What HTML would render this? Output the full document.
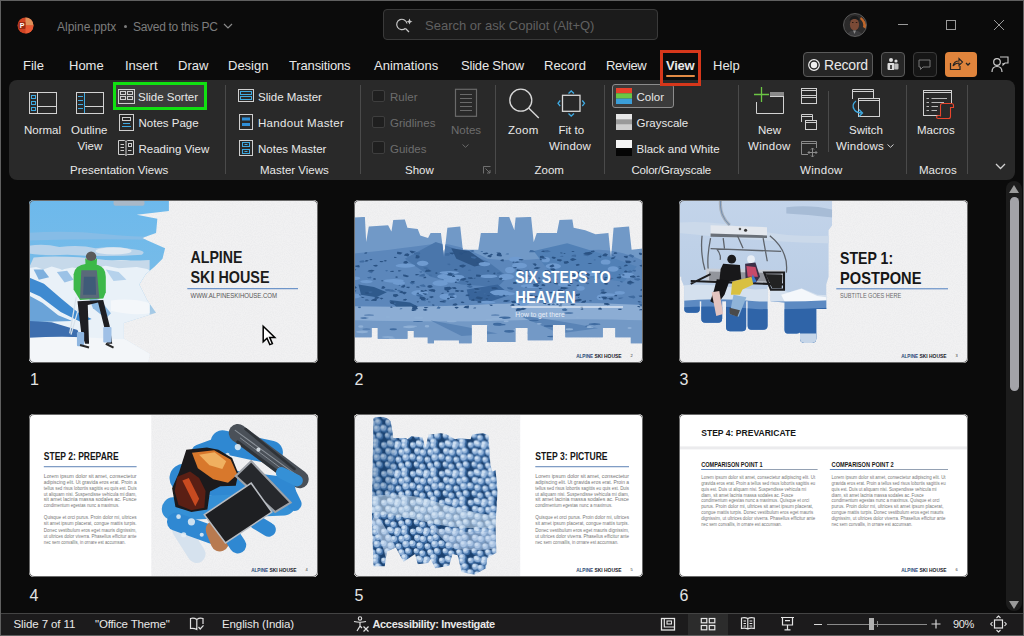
<!DOCTYPE html>
<html><head><meta charset="utf-8">
<style>
*{margin:0;padding:0;box-sizing:border-box}
html,body{width:1024px;height:636px;overflow:hidden;background:#0b0b0b}
body{position:relative;font-family:"Liberation Sans",sans-serif;color:#e8e8e8}
.a{position:absolute;white-space:nowrap;line-height:1}
.t13{font-size:13px}
.t12{font-size:12px;letter-spacing:-0.15px}
.dim{color:#6d6d6d}
.sep{position:absolute;width:1px;background:#4a4a4a}
svg{position:absolute;overflow:visible}
#frame{position:absolute;left:0;top:0;width:1024px;height:636px;border:1px solid #606060;pointer-events:none}
</style></head><body>

<!-- TITLE BAR -->
<svg style="left:17px;top:17px" width="17" height="17" viewBox="0 0 17 17">
  <circle cx="8.5" cy="8.5" r="8" fill="#d14424"/>
  <path d="M8.5 .5 A8 8 0 0 1 16.5 8.5 L8.5 8.5Z" fill="#e0915a"/>
  <path d="M8.5 8.5 L16.5 8.5 A8 8 0 0 1 8.5 16.5Z" fill="#e85a35"/>
  <rect x="1.5" y="5" width="7" height="7" rx="1" fill="#9a2b14"/>
  <text x="2.7" y="11" font-family="Liberation Sans" font-weight="700" font-size="7" fill="#fff">P</text>
</svg>
<div class="a" style="left:57px;top:20.5px;font-size:12px;color:#7c7c7c">Alpine.pptx</div>
<div style="position:absolute;left:124px;top:24.5px;width:3px;height:3px;border-radius:50%;background:#7c7c7c"></div>
<div class="a" style="left:133px;top:20.5px;font-size:12px;color:#7c7c7c;letter-spacing:-0.3px">Saved to this PC</div>
<svg style="left:223px;top:22.5px" width="10" height="6" viewBox="0 0 10 6"><path d="M1 1 L5 5 L9 1" stroke="#8a8a8a" stroke-width="1.2" fill="none"/></svg>

<div style="position:absolute;left:383px;top:9px;width:275px;height:31px;border:1px solid #3a3a3a;border-radius:4px;background:#1b1b1b"></div>
<svg style="left:396px;top:17px" width="18" height="17" viewBox="0 0 18 17">
  <path d="M11 6.5 A5.2 5.2 0 1 0 9.5 11.2" stroke="#c8c8c8" stroke-width="1.2" fill="none"/>
  <path d="M9.5 11.5 L13 15" stroke="#c8c8c8" stroke-width="1.3"/>
  <path d="M13.5 1.5 Q13.8 4.2 16.5 4.5 Q13.8 4.8 13.5 7.5 Q13.2 4.8 10.5 4.5 Q13.2 4.2 13.5 1.5Z" fill="#c8c8c8"/>
</svg>
<div class="a t13" style="left:425px;top:19px;color:#606060">Search or ask Copilot (Alt+Q)</div>

<!-- avatar -->
<svg style="left:843px;top:13px" width="24" height="24" viewBox="0 0 24 24">
  <clipPath id="av"><circle cx="12" cy="12" r="11.3"/></clipPath>
  <g clip-path="url(#av)">
    <rect width="24" height="24" fill="#2b2a2a"/>
    <path d="M18 4 Q24 8 23 16 L20 14 Q21 9 17 6Z" fill="#c0662a"/>
    <ellipse cx="11.5" cy="11.5" rx="4.6" ry="6" fill="#7a4a36"/>
    <path d="M9 9.5 H10.5 M12.8 9.5 H14.3" stroke="#2a1a14" stroke-width="1"/>
    <path d="M6.5 8 Q7 3 11.5 3 Q16 3 16.5 8 Q14 5.5 11.5 6 Q9 5.5 6.5 8Z" fill="#1a1a1a"/>
    <path d="M3 24 Q5 17 11.5 17.5 Q18 17 20 24Z" fill="#3a3a3c"/>
    <path d="M10 17.5 L11.5 21 L13 17.5" fill="#8a8a8a"/>
  </g>
  <circle cx="12" cy="12" r="11.5" fill="none" stroke="#6a6a6a" stroke-width="0.8"/>
</svg>
<!-- window controls -->
<div style="position:absolute;left:898px;top:24px;width:10px;height:1px;background:#9a9a9a"></div>
<div style="position:absolute;left:946px;top:20px;width:10px;height:10px;border:1px solid #9a9a9a"></div>
<svg style="left:994px;top:20px" width="10" height="10" viewBox="0 0 10 10"><path d="M0 0L10 10M10 0L0 10" stroke="#9a9a9a" stroke-width="1"/></svg>

<!-- TABS -->
<div class="a t13" style="left:23px;top:59px">File</div>
<div class="a t13" style="left:69px;top:59px">Home</div>
<div class="a t13" style="left:125px;top:59px">Insert</div>
<div class="a t13" style="left:178px;top:59px">Draw</div>
<div class="a t13" style="left:228px;top:59px">Design</div>
<div class="a t13" style="left:289px;top:59px;letter-spacing:-0.15px">Transitions</div>
<div class="a t13" style="left:374px;top:59px">Animations</div>
<div class="a t13" style="left:461px;top:59px;letter-spacing:-0.2px">Slide Show</div>
<div class="a t13" style="left:544px;top:59px">Record</div>
<div class="a t13" style="left:606px;top:59px;letter-spacing:-0.4px">Review</div>
<div class="a t13" style="left:666px;top:59px;font-weight:700;letter-spacing:-0.3px">View</div>
<div style="position:absolute;left:666px;top:75px;width:29px;height:2px;background:#e38b45;border-radius:1px"></div>
<div style="position:absolute;left:660px;top:50px;width:41px;height:36px;border:3px solid #d6371b;z-index:5"></div>
<div class="a t13" style="left:713px;top:59px">Help</div>

<!-- right tab buttons -->
<div style="position:absolute;left:803px;top:52px;width:70px;height:25px;border:1px solid #5a5a5a;border-radius:4px;background:#262626"></div>
<svg style="left:808px;top:59px" width="12" height="12" viewBox="0 0 12 12"><circle cx="6" cy="6" r="5.3" stroke="#eee" stroke-width="1.2" fill="none"/><circle cx="6" cy="6" r="3.2" fill="#eee"/></svg>
<div class="a" style="left:824px;top:58px;font-size:14px;letter-spacing:-0.2px">Record</div>
<div style="position:absolute;left:881px;top:52px;width:24px;height:25px;border:1px solid #5a5a5a;border-radius:4px;background:#262626"></div>
<svg style="left:886px;top:57px" width="14" height="14" viewBox="0 0 14 14"><circle cx="5" cy="3" r="2" fill="#ddd"/><circle cx="10" cy="4" r="1.6" fill="#ddd"/><rect x="1.5" y="6" width="7" height="7" rx="1" fill="#ddd"/><rect x="8.5" y="6.5" width="4" height="6" rx="1" fill="#bbb"/><rect x="4" y="8" width="2" height="4" fill="#444"/></svg>
<div style="position:absolute;left:913px;top:52px;width:24px;height:25px;border:1px solid #3a3a3a;border-radius:4px;background:#161616"></div>
<svg style="left:918px;top:59px" width="14" height="12" viewBox="0 0 14 12"><path d="M1 1H12V8H5L2.5 10.5V8H1Z" stroke="#777" stroke-width="1" fill="none"/></svg>
<div style="position:absolute;left:945px;top:52px;width:32px;height:25px;border-radius:4px;background:#e0843c"></div>
<svg style="left:949px;top:57px" width="24" height="14" viewBox="0 0 24 14"><path d="M1.5 6V12.5H11V9" stroke="#222" stroke-width="1.2" fill="none"/><path d="M4 9 Q5 4 10 4 V1.5 L13.5 5 L10 8.5 V6 Q6.5 6 4 9Z" stroke="#222" stroke-width="1.1" fill="none"/><path d="M17 6 L19 8 L21 6" stroke="#222" stroke-width="1.3" fill="none"/></svg>
<svg style="left:991px;top:56px" width="18" height="17" viewBox="0 0 18 17"><circle cx="6" cy="6" r="3.3" stroke="#ccc" stroke-width="1.2" fill="none"/><path d="M1 16 Q1 10.5 6 10.5 Q11 10.5 11 16" stroke="#ccc" stroke-width="1.2" fill="none"/><path d="M9 1H17V7H14L12 9V7" stroke="#ccc" stroke-width="1.1" fill="none"/></svg>

<!-- RIBBON -->
<div style="position:absolute;left:9px;top:80px;width:1006px;height:100px;background:#292929;border-radius:8px"></div>
<div id="ribbon">
<!-- Presentation Views -->
<svg style="left:28px;top:91px" width="30" height="24" viewBox="0 0 30 24">
  <rect x="1.5" y="1.5" width="27" height="21" stroke="#d2d2d2" stroke-width="1" fill="none"/>
  <path d="M9.5 1.5V22.5M9.5 15.5H28.5" stroke="#d2d2d2" stroke-width="1"/>
  <rect x="3.5" y="4.5" width="4" height="3" stroke="#3fa9e0" stroke-width="1" fill="none"/>
  <rect x="3.5" y="10.5" width="4" height="3" stroke="#3fa9e0" stroke-width="1" fill="none"/>
  <rect x="3.5" y="16.5" width="4" height="3" stroke="#3fa9e0" stroke-width="1" fill="none"/>
</svg>
<div class="a" style="left:24px;top:124.9px;font-size:11.5px">Normal</div>
<svg style="left:75px;top:91px" width="30" height="24" viewBox="0 0 30 24">
  <rect x="1.5" y="1.5" width="27" height="21" stroke="#d2d2d2" stroke-width="1" fill="none"/>
  <path d="M9.5 15.5H28.5" stroke="#d2d2d2" stroke-width="1"/>
  <path d="M9.5 2V22" stroke="#3fa9e0" stroke-width="1"/>
  <path d="M3 5.5H8M3 9.5H8M3 13.5H8M3 17.5H8" stroke="#3fa9e0" stroke-width="1"/>
</svg>
<div class="a" style="left:71px;top:124.9px;font-size:11.5px">Outline</div>
<div class="a" style="left:77.5px;top:140.8px;font-size:11.5px">View</div>

<div style="position:absolute;left:113px;top:82px;width:94px;height:28px;border:3px solid #11e011;background:#3c3c3c"></div>
<svg style="left:117px;top:88px" width="18" height="16" viewBox="0 0 18 16">
  <rect x="1.5" y="1.5" width="16" height="14" stroke="#cfcfcf" stroke-width="1" fill="none"/>
  <rect x="3.5" y="3.5" width="5" height="3" stroke="#cfcfcf" stroke-width="1" fill="none"/>
  <rect x="10.5" y="3.5" width="5" height="3" stroke="#cfcfcf" stroke-width="1" fill="none"/>
  <rect x="3.5" y="8.5" width="5" height="3" stroke="#cfcfcf" stroke-width="1" fill="none"/>
  <rect x="10.5" y="8.5" width="5" height="3" stroke="#cfcfcf" stroke-width="1" fill="none"/>
</svg>
<div class="a" style="left:138px;top:92.3px;font-size:11.5px">Slide Sorter</div>
<svg style="left:118px;top:113px" width="16" height="18" viewBox="0 0 16 18">
  <rect x="1.5" y="1.5" width="14" height="16" stroke="#cfcfcf" stroke-width="1" fill="none"/>
  <rect x="4.5" y="4.5" width="8" height="3" stroke="#cfcfcf" stroke-width="1" fill="none"/>
  <path d="M5 10.5H12M4 13.5H13" stroke="#3fa9e0" stroke-width="1"/>
</svg>
<div class="a" style="left:138.5px;top:118.3px;font-size:11.5px">Notes Page</div>
<svg style="left:117px;top:139px" width="18" height="17" viewBox="0 0 18 17">
  <path d="M1.5 1.5H7.5L9 2.5L10.5 1.5H16.5V15.5H10.5L9 16.5L7.5 15.5H1.5Z" stroke="#cfcfcf" stroke-width="1" fill="none"/>
  <path d="M9 2.5V16" stroke="#cfcfcf" stroke-width="1"/>
  <path d="M3.5 5.5H7M3.5 8.5H7M3.5 11.5H7M11 11.5H14.5" stroke="#cfcfcf" stroke-width="1"/>
  <rect x="11.5" y="4.5" width="3" height="3" stroke="#cfcfcf" stroke-width="1" fill="none"/>
</svg>
<div class="a" style="left:138.5px;top:143.9px;font-size:11.5px">Reading View</div>
<div class="a" style="left:70px;top:164.8px;font-size:11.5px">Presentation Views</div>
<div class="sep" style="left:225px;top:85px;height:89px"></div>

<!-- Master Views -->
<svg style="left:237px;top:88px" width="18" height="15" viewBox="0 0 18 15">
  <rect x="1.5" y="1.5" width="15" height="12" stroke="#cfcfcf" stroke-width="1" fill="none"/>
  <rect x="3.5" y="3.5" width="11" height="3" stroke="#3fa9e0" stroke-width="1" fill="none"/>
  <rect x="3.5" y="8.5" width="11" height="3" stroke="#3fa9e0" stroke-width="1" fill="none"/>
</svg>
<div class="a" style="left:258px;top:92.3px;font-size:11.5px">Slide Master</div>
<svg style="left:238px;top:113px" width="16" height="18" viewBox="0 0 16 18">
  <rect x="1.5" y="1.5" width="13" height="15" stroke="#cfcfcf" stroke-width="1" fill="none"/>
  <rect x="4" y="4.5" width="8" height="3" fill="#2f8fd8"/>
  <rect x="4" y="10" width="8" height="3" fill="#2f8fd8"/>
</svg>
<div class="a" style="left:258px;top:118.3px;font-size:11.5px;letter-spacing:0.3px">Handout Master</div>
<svg style="left:238px;top:139px" width="16" height="18" viewBox="0 0 16 18">
  <rect x="1.5" y="1.5" width="13" height="15" stroke="#cfcfcf" stroke-width="1" fill="none"/>
  <rect x="4.5" y="3.5" width="7" height="4" stroke="#3fa9e0" stroke-width="1" fill="none"/>
  <rect x="4.5" y="10.5" width="7" height="4" stroke="#3fa9e0" stroke-width="1" fill="none"/>
  <path d="M6.5 5.5H9.5M6.5 12.5H9.5" stroke="#3fa9e0" stroke-width="1"/>
</svg>
<div class="a" style="left:258px;top:143.9px;font-size:11.5px">Notes Master</div>
<div class="a" style="left:260px;top:164.8px;font-size:11.5px">Master Views</div>
<div class="sep" style="left:360px;top:85px;height:89px"></div>

<!-- Show -->
<div style="position:absolute;left:372px;top:89.5px;width:12.5px;height:12.5px;border:1px solid #3e3e3e;border-radius:2px;background:#1f1f1f"></div>
<div style="position:absolute;left:372px;top:115.5px;width:12.5px;height:12.5px;border:1px solid #3e3e3e;border-radius:2px;background:#1f1f1f"></div>
<div style="position:absolute;left:372px;top:141.3px;width:12.5px;height:12.5px;border:1px solid #3e3e3e;border-radius:2px;background:#1f1f1f"></div>
<div class="a dim" style="left:390px;top:92.3px;font-size:11.5px">Ruler</div>
<div class="a dim" style="left:390px;top:118.3px;font-size:11.5px">Gridlines</div>
<div class="a dim" style="left:390px;top:143.9px;font-size:11.5px">Guides</div>
<svg style="left:454px;top:88px" width="24" height="30" viewBox="0 0 24 30">
  <rect x="1.5" y="1.3" width="21" height="27" stroke="#6a6a6a" stroke-width="1.2" fill="none"/>
  <path d="M6 6.5H18M6 10.5H18M6 14.5H18M6 18.5H18M6 22.5H18" stroke="#6a6a6a" stroke-width="1.1"/>
</svg>
<div class="a dim" style="left:451px;top:124.9px;font-size:11.5px">Notes</div>
<svg style="left:462px;top:144px" width="7" height="4" viewBox="0 0 7 4"><path d="M.5 .5L3.5 3.3L6.5 .5" stroke="#6a6a6a" stroke-width="1" fill="none"/></svg>
<div class="a" style="left:405px;top:164.8px;font-size:11.5px">Show</div>
<svg style="left:483px;top:166px" width="8" height="8" viewBox="0 0 8 8"><path d="M.5 7.5V.5H7.5M2.5 2.5L7 7M7 4V7H4" stroke="#777" stroke-width="0.9" fill="none"/></svg>
<div class="sep" style="left:494.5px;top:85px;height:89px"></div>

<!-- Zoom -->
<svg style="left:508px;top:88px" width="33" height="32" viewBox="0 0 33 32">
  <circle cx="12.8" cy="12.2" r="11" stroke="#d8d8d8" stroke-width="1.3" fill="none"/>
  <path d="M20.6 20L30.8 30" stroke="#d8d8d8" stroke-width="1.4"/>
</svg>
<div class="a" style="left:508px;top:124.9px;font-size:11.5px;letter-spacing:0.3px">Zoom</div>
<svg style="left:557px;top:89px" width="28" height="29" viewBox="0 0 28 29">
  <rect x="5.5" y="6.3" width="17.5" height="16" stroke="#d8d8d8" stroke-width="1.3" fill="none"/>
  <path d="M11.5 4.5L14.2 2L17 4.5M11.5 24.5L14.2 27L17 24.5M3.2 11.5L1 14.3L3.2 17M25.3 11.5L27.5 14.3L25.3 17" stroke="#3fa9e0" stroke-width="1.3" fill="none"/>
</svg>
<div class="a" style="left:558.5px;top:124.9px;font-size:11.5px">Fit to</div>
<div class="a" style="left:549px;top:140.8px;font-size:11.5px;letter-spacing:0.2px">Window</div>
<div class="a" style="left:534.5px;top:164.8px;font-size:11.5px">Zoom</div>
<div class="sep" style="left:603.5px;top:85px;height:89px"></div>

<!-- Color/Grayscale -->
<div style="position:absolute;left:612px;top:84px;width:62px;height:24px;border:1px solid #8c8c8c;border-radius:3px;background:#3b3b3b"></div>
<svg style="left:616px;top:88px" width="16" height="16" viewBox="0 0 16 16">
  <rect x="0" y="0" width="16" height="5.3" fill="#e8412c"/>
  <rect x="0" y="5.3" width="16" height="5.3" fill="#6cc644"/>
  <rect x="0" y="10.6" width="16" height="5.4" fill="#3b9ed8"/>
</svg>
<div class="a" style="left:636.5px;top:92.3px;font-size:11.5px">Color</div>
<svg style="left:616px;top:114px" width="16" height="16" viewBox="0 0 16 16">
  <rect x="0" y="0" width="16" height="16" fill="#e6e6e6"/>
  <rect x="0" y="5.3" width="16" height="5.3" fill="#9a9a9a"/>
  <rect x="0" y="10.6" width="16" height="5.4" fill="#cfcfcf"/>
</svg>
<div class="a" style="left:636.5px;top:118.3px;font-size:11.5px">Grayscale</div>
<svg style="left:616px;top:140px" width="16" height="16" viewBox="0 0 16 16">
  <rect x="0" y="0" width="16" height="8" fill="#f4f4f4"/>
  <rect x="0" y="8" width="16" height="8" fill="#050505"/>
</svg>
<div class="a" style="left:636.5px;top:143.9px;font-size:11.5px">Black and White</div>
<div class="a" style="left:631.5px;top:164.8px;font-size:11.5px;letter-spacing:-0.2px">Color/Grayscale</div>
<div class="sep" style="left:737.5px;top:85px;height:89px"></div>

<!-- Window -->
<svg style="left:753px;top:86px" width="33" height="30" viewBox="0 0 33 30">
  <path d="M17 6.5H30.5V27.5H3.5V16" stroke="#d2d2d2" stroke-width="1" fill="none"/>
  <rect x="17" y="6" width="14" height="4" fill="#8a8a8a"/>
  <path d="M30.5 10.5H17" stroke="#d2d2d2" stroke-width="1"/>
  <path d="M8.5 1V16M1 8.5H16" stroke="#6cc644" stroke-width="1.3"/>
</svg>
<div class="a" style="left:758px;top:124.9px;font-size:11.5px">New</div>
<div class="a" style="left:748px;top:140.8px;font-size:11.5px;letter-spacing:0.3px">Window</div>
<svg style="left:800px;top:87px" width="18" height="18" viewBox="0 0 18 18">
  <rect x="1.5" y="1.5" width="15" height="15" stroke="#cfcfcf" stroke-width="1" fill="none"/>
  <path d="M1.5 3.5H16.5M1.5 8.5H16.5M1.5 10.5H16.5" stroke="#cfcfcf" stroke-width="1"/>
</svg>
<svg style="left:800px;top:113px" width="18" height="18" viewBox="0 0 18 18">
  <path d="M1.5 9V1.5H12.5V7" stroke="#cfcfcf" stroke-width="1" fill="none"/>
  <path d="M1.5 3.5H12.5" stroke="#cfcfcf" stroke-width="1"/>
  <rect x="5.5" y="7.5" width="11" height="9" stroke="#cfcfcf" stroke-width="1" fill="none"/>
  <path d="M5.5 9.5H16.5" stroke="#cfcfcf" stroke-width="1"/>
</svg>
<svg style="left:800px;top:140px" width="18" height="18" viewBox="0 0 18 18">
  <path d="M1.5 14.5V1.5H16.5V8" stroke="#8a8a8a" stroke-width="1" fill="none"/>
  <path d="M1.5 3.5H16.5M1.5 14.5H8" stroke="#8a8a8a" stroke-width="1"/>
  <path d="M12.5 8V17M8 12.5H17M11 9.5L12.5 8L14 9.5M11 15.5L12.5 17L14 15.5M9.5 11L8 12.5L9.5 14M15.5 11L17 12.5L15.5 14" stroke="#8a8a8a" stroke-width="1" fill="none"/>
</svg>
<div class="sep" style="left:827.5px;top:91px;height:61px"></div>
<svg style="left:848px;top:88px" width="35" height="32" viewBox="0 0 35 32">
  <path d="M4.5 11V1.5H25.5V10.5" stroke="#d2d2d2" stroke-width="1" fill="none"/>
  <path d="M4.5 3.5H25.5" stroke="#d2d2d2" stroke-width="1"/>
  <rect x="10.5" y="10.5" width="21" height="18" stroke="#d2d2d2" stroke-width="1" fill="#292929"/>
  <path d="M10.5 12.5H31.5" stroke="#d2d2d2" stroke-width="1"/>
  <path d="M8 13 Q3 17 6.5 22 Q9 25 14 25" stroke="#3fa9e0" stroke-width="1.3" fill="none"/>
  <path d="M11 21.5L14.5 25L11 28.5" stroke="#3fa9e0" stroke-width="1.3" fill="none"/>
</svg>
<div class="a" style="left:849px;top:124.9px;font-size:11.5px">Switch</div>
<div class="a" style="left:836px;top:140.8px;font-size:11.5px;letter-spacing:0.2px">Windows</div>
<svg style="left:887px;top:144px" width="7" height="4" viewBox="0 0 7 4"><path d="M.5 .5L3.5 3.3L6.5 .5" stroke="#d2d2d2" stroke-width="1" fill="none"/></svg>
<div class="a" style="left:800px;top:164.8px;font-size:11.5px;letter-spacing:0.3px">Window</div>
<div class="sep" style="left:906px;top:85px;height:89px"></div>

<!-- Macros -->
<svg style="left:922px;top:89px" width="33" height="31" viewBox="0 0 33 31">
  <rect x="1.5" y="1.5" width="28" height="25" stroke="#d2d2d2" stroke-width="1" fill="none"/>
  <path d="M1.5 3.5H29.5" stroke="#d2d2d2" stroke-width="1"/>
  <path d="M4.5 9.5H7M9.5 9.5H25M4.5 13.5H7M9.5 13.5H22M4.5 17.5H7M9.5 17.5H16M4.5 21.5H7M9.5 21.5H15" stroke="#b8b8b8" stroke-width="1"/>
  <rect x="17" y="14" width="13" height="15" fill="#292929"/>
  <path d="M18.5 27.5V16.5Q18.5 14.5 20.5 14.5H29.5Q31.5 14.5 31.5 16.5V18.5H28.5V27.5Q28.5 29.5 26.5 29.5H16.5Q14.5 29.5 14.5 28Q14.5 26.5 16.5 26.5H18.5" stroke="#e8452c" stroke-width="1.1" fill="none"/>
</svg>
<div class="a" style="left:917px;top:124.9px;font-size:11.5px">Macros</div>
<div class="a" style="left:919px;top:164.8px;font-size:11.5px">Macros</div>
<div class="sep" style="left:966.5px;top:85px;height:89px"></div>
<svg style="left:995px;top:163px" width="11" height="7" viewBox="0 0 11 7"><path d="M1 1L5.5 5.5L10 1" stroke="#d2d2d2" stroke-width="1.3" fill="none"/></svg>
</div>

<!-- SLIDE AREA -->
<div id="slides">
<svg width="0" height="0" style="position:absolute">
  <defs>
    <filter id="noise" x="0" y="0" width="100%" height="100%">
      <feTurbulence type="fractalNoise" baseFrequency="0.9" numOctaves="2" seed="3" result="n"/>
      <feColorMatrix in="n" type="matrix" values="0 0 0 0 0.55  0 0 0 0 0.57  0 0 0 0 0.62  0 0 0 -1.6 1.0" result="c"/>
      <feComposite in="c" in2="SourceGraphic" operator="in"/>
    </filter>
    <pattern id="trees" patternUnits="userSpaceOnUse" width="112" height="112"><rect width="112" height="112" fill="#1a406e"/><g fill="#3a6aa2"><circle cx="11" cy="13" r="12"/><circle cx="11" cy="125" r="12"/><circle cx="123" cy="13" r="12"/><circle cx="123" cy="125" r="12"/><circle cx="40" cy="10" r="11"/><circle cx="40" cy="122" r="11"/><circle cx="61" cy="20" r="12"/><circle cx="89" cy="15" r="13"/><circle cx="89" cy="127" r="13"/><circle cx="28" cy="37" r="14"/><circle cx="50" cy="42" r="14"/><circle cx="79" cy="41" r="14"/><circle cx="-12" cy="35" r="13"/><circle cx="100" cy="35" r="13"/><circle cx="9" cy="59" r="14"/><circle cx="121" cy="59" r="14"/><circle cx="37" cy="67" r="15"/><circle cx="67" cy="70" r="13"/><circle cx="95" cy="61" r="15"/><circle cx="24" cy="88" r="12"/><circle cx="47" cy="97" r="13"/><circle cx="78" cy="93" r="13"/><circle cx="-8" cy="88" r="13"/><circle cx="104" cy="88" r="13"/><circle cx="34" cy="6" r="14"/><circle cx="34" cy="118" r="14"/><circle cx="64" cy="10" r="15"/><circle cx="64" cy="122" r="15"/><circle cx="90" cy="0" r="14"/><circle cx="90" cy="112" r="14"/></g><g fill="#94b4da"><circle cx="7" cy="9" r="11"/><circle cx="7" cy="121" r="11"/><circle cx="119" cy="9" r="11"/><circle cx="119" cy="121" r="11"/><circle cx="36" cy="6" r="10"/><circle cx="36" cy="118" r="10"/><circle cx="57" cy="16" r="10"/><circle cx="85" cy="11" r="11"/><circle cx="85" cy="123" r="11"/><circle cx="24" cy="33" r="12"/><circle cx="46" cy="38" r="12"/><circle cx="75" cy="37" r="12"/><circle cx="-16" cy="31" r="11"/><circle cx="96" cy="31" r="11"/><circle cx="5" cy="55" r="12"/><circle cx="117" cy="55" r="12"/><circle cx="33" cy="63" r="12"/><circle cx="63" cy="66" r="11"/><circle cx="91" cy="57" r="13"/><circle cx="20" cy="84" r="10"/><circle cx="43" cy="93" r="11"/><circle cx="74" cy="89" r="11"/><circle cx="-12" cy="84" r="11"/><circle cx="100" cy="84" r="11"/><circle cx="30" cy="2" r="12"/><circle cx="30" cy="114" r="12"/><circle cx="60" cy="6" r="13"/><circle cx="60" cy="118" r="13"/><circle cx="86" cy="-4" r="12"/><circle cx="86" cy="108" r="12"/></g><g fill="#cfe0f2"><circle cx="4" cy="6" r="6"/><circle cx="4" cy="118" r="6"/><circle cx="116" cy="6" r="6"/><circle cx="116" cy="118" r="6"/><circle cx="33" cy="3" r="6"/><circle cx="33" cy="115" r="6"/><circle cx="54" cy="13" r="6"/><circle cx="82" cy="8" r="6"/><circle cx="82" cy="120" r="6"/><circle cx="21" cy="30" r="7"/><circle cx="43" cy="35" r="7"/><circle cx="72" cy="34" r="7"/><circle cx="-19" cy="28" r="7"/><circle cx="93" cy="28" r="7"/><circle cx="2" cy="52" r="7"/><circle cx="114" cy="52" r="7"/><circle cx="30" cy="60" r="7"/><circle cx="60" cy="63" r="6"/><circle cx="88" cy="54" r="7"/><circle cx="17" cy="81" r="6"/><circle cx="40" cy="90" r="6"/><circle cx="71" cy="86" r="7"/><circle cx="-15" cy="81" r="7"/><circle cx="97" cy="81" r="7"/><circle cx="27" cy="-1" r="7"/><circle cx="27" cy="111" r="7"/><circle cx="57" cy="3" r="7"/><circle cx="57" cy="115" r="7"/><circle cx="83" cy="-7" r="7"/><circle cx="83" cy="105" r="7"/></g></pattern>
    <clipPath id="rr"><rect x="0" y="0" width="289" height="163" rx="4.5"/></clipPath>
    <linearGradient id="sky1" x1="0" y1="0" x2="0" y2="1">
      <stop offset="0" stop-color="#6db9ec"/><stop offset="0.45" stop-color="#76bbe8"/><stop offset="0.7" stop-color="#a9cbe6"/><stop offset="1" stop-color="#cfdeee"/>
    </linearGradient>
    <linearGradient id="sky3" x1="0" y1="0" x2="0" y2="1">
      <stop offset="0" stop-color="#c3d4ea"/><stop offset="1" stop-color="#b4c9e2"/>
    </linearGradient>
  </defs>
</svg>

<!-- ========== SLIDE 1 ========== -->
<svg style="left:28.5px;top:199.6px" width="289" height="163" viewBox="0 0 289 163">
 <g clip-path="url(#rr)">
  <rect width="289" height="163" fill="#f1f1f2"/>
  <rect width="289" height="163" fill="#fff" filter="url(#noise)" opacity="0.15"/>
  <g transform="translate(-0.5,-0.6) scale(0.2577)">
    <!-- photo clip shape -->
    <clipPath id="p1"><path d="M0 0 H545 V45 L420 60 L500 75 L495 130 L440 150 L530 190 L520 230 L490 260 L455 290 L430 330 L460 390 L495 440 L370 480 L370 540 L470 600 L465 640 H0Z"/></clipPath>
    <g clip-path="url(#p1)">
      <rect x="0" y="0" width="600" height="640" fill="url(#sky1)"/>
      <rect x="330" y="0" width="120" height="25" rx="10" fill="#a8b8c8"/>
      <path d="M0 130 Q150 120 300 135 T560 140 V160 Q300 150 0 160Z" fill="#86bce6"/>
      <path d="M0 180 Q60 170 120 185 Q200 175 260 190 Q330 180 420 195 Q460 200 440 215 Q300 225 150 215 Q60 220 0 210Z" fill="#b9d3ea"/><ellipse cx="330" cy="200" rx="70" ry="14" fill="#dfe8f1"/><ellipse cx="360" cy="245" rx="45" ry="10" fill="#dfe8f1"/>
      <path d="M20 225 Q140 215 300 235 Q400 240 470 235 V270 Q300 275 0 270Z" fill="#c6d9ea"/>
      <!-- mountains -->
      <g transform="translate(0,-28)">
      <path d="M0 295 L30 290 L57 300 L90 288 L130 300 L170 292 L220 300 L300 285 L350 295 L420 290 L470 300 V640 H0Z" fill="#e9f1f8"/>
      <path d="M20 300 L57 300 L80 330 L40 340Z" fill="#7eb0de"/>
      <path d="M110 310 L150 305 L175 340 L140 350Z" fill="#9cc2e6"/>
      <path d="M300 300 L350 310 L380 340 L330 345Z" fill="#b6d2ec"/>
      <path d="M0 330 L60 355 L130 415 L190 465 L245 492 L205 505 L125 465 L45 405 L0 385Z" fill="#3f8ad0"/>
      <path d="M0 400 L55 430 L115 478 L170 500 L0 505Z" fill="#6aa3d8"/>
      <path d="M230 400 L280 420 L320 470 L300 490 L250 450Z" fill="#8ab8e2"/>
      <path d="M0 500 L90 505 L190 535 L210 580 L0 585Z" fill="#3d6eae"/>
      <path d="M320 420 Q400 410 470 430 V470 Q400 480 320 460Z" fill="#f4f7fa"/>
      <path d="M0 565 Q150 555 300 568 Q420 575 500 565 V640 H0Z" fill="#f3f6f9"/></g>
      <path d="M0 580 Q150 570 300 580 Q420 585 500 578 V640 H0Z" fill="#f3f6f9"/>
    </g>
    <!-- hiker -->
    <path d="M160 520 L185 380 M165 525 L195 420" stroke="#d8e2ea" stroke-width="5"/>
    <path d="M190 395 L205 520 L220 560 L235 560 L230 410 L270 400 L295 500 L305 560 L325 560 L315 490 L290 390Z" fill="#1e1e22"/>
    <rect x="188" y="515" width="28" height="55" rx="4" fill="#8fb6e0"/>
    <rect x="290" y="495" width="32" height="60" rx="4" fill="#9fc0e6"/>
    <path d="M175 290 Q180 255 225 250 L270 255 Q300 265 300 300 L300 360 L290 385 L200 390 L175 350Z" fill="#3db84a"/>
    <path d="M205 275 L265 275 L275 385 L200 385Z" fill="#5a6a7a"/>
    <path d="M215 300 L260 300 L262 370 L212 370Z" fill="#3f5b78"/>
    <circle cx="243" cy="222" r="20" fill="#5a5a5a"/>
    <path d="M220 228 Q243 250 266 228 L264 268 L222 268Z" fill="#3cb848"/>
    <path d="M200 565 L235 575 M300 560 L330 575" stroke="#2a2a2a" stroke-width="8"/>
  </g>
  <text x="161.5" y="63.4" font-family="Liberation Sans" font-weight="700" font-size="16.5" fill="#1b1b1b" textLength="52" lengthAdjust="spacingAndGlyphs">ALPINE</text>
  <text x="161.5" y="83.4" font-family="Liberation Sans" font-weight="700" font-size="16.5" fill="#1b1b1b" textLength="79" lengthAdjust="spacingAndGlyphs">SKI HOUSE</text>
  <rect x="158.3" y="88.2" width="110.7" height="1" fill="#4f7fc0"/>
  <text x="161.5" y="98" font-family="Liberation Sans" font-size="6.8" fill="#555" textLength="86.5" lengthAdjust="spacingAndGlyphs">WWW.ALPINESKIHOUSE.COM</text>
 </g>
 <rect x="0.5" y="0.5" width="288" height="162" rx="4.5" fill="none" stroke="#6a6a6a" stroke-width="1"/>
</svg>
<div class="a" style="left:30px;top:372px;font-size:16px;color:#e4e4e4">1</div>
<!-- cursor -->
<svg style="left:262px;top:325px" width="14" height="21" viewBox="0 0 14 21">
  <path d="M1.2 1.2 L1.2 16.8 L5 13.2 L7.8 19.6 L10.4 18.6 L7.7 12.4 L12.8 12.4Z" fill="#fff" stroke="#000" stroke-width="1.5" stroke-linejoin="miter"/>
</svg>
<!-- ========== SLIDE 2 ========== -->
<svg style="left:353.7px;top:199.6px" width="289" height="163" viewBox="0 0 289 163">
 <g clip-path="url(#rr)">
  <rect width="289" height="163" fill="#f1f1f2"/>
  <rect width="289" height="163" fill="#fff" filter="url(#noise)" opacity="0.15"/>
  <g transform="translate(-0.7,-0.6) scale(0.2577)">
    <clipPath id="p2"><path d="M0 70 L45 68 L50 165 L60 105 L135 100 L148 125 L155 80 L200 78 L210 110 L250 115 L260 140 L290 150 L300 130 L340 130 L352 225 L365 110 L415 105 L425 195 L485 195 L495 130 L560 130 L565 68 L605 68 L625 120 L630 70 L690 68 L700 165 L712 130 L790 130 L800 80 L850 78 L855 110 L900 120 L940 135 L990 130 L1000 230 L1010 110 L1070 105 L1080 195 L1130 190 L1140 135 L1125 120 V559 L1077 559 L1077 535 L1017 535 L1017 499 L968 499 L968 535 L823 535 L823 487 L774 487 L774 547 L677 547 L677 499 L629 499 L629 553 L519 553 L519 487 L459 487 L459 559 L410 559 L410 547 L313 547 L313 559 L289 559 L289 535 L235 535 L235 511 L210 511 L210 541 L95 541 L95 499 L71 499 L71 535 L0 535Z"/></clipPath>
    <g clip-path="url(#p2)">
      <rect x="0" y="0" width="1130" height="640" fill="#7199c7"/>
      <path d="M0 210 Q200 190 330 170 Q420 175 520 230 Q700 250 900 200 Q1000 180 1130 240 V420 H0Z" fill="#5c87bb"/>
      <path d="M200 230 L320 165 L420 200 L520 240 L600 300 L560 340 L420 330 L300 300Z" fill="#4a76ab"/>
      <path d="M380 190 L450 200 L520 250 L470 260 L400 230Z" fill="#2e5585"/>
      <path d="M20 330 L80 340 L130 360 L90 380 L30 370Z" fill="#2f5a8c"/>
      <path d="M140 390 L220 400 L260 420 L180 430Z" fill="#2f5a8c"/>
      <path d="M440 350 L560 330 L610 370 L520 400 L450 390Z" fill="#38649a"/>
      <path d="M700 200 L830 170 L960 210 L1100 260 L1050 320 L900 300 L760 280Z" fill="#5180b6"/>
      <path d="M0 415 Q300 420 560 405 Q850 395 1130 410 V470 Q600 480 0 470Z" fill="#8cadd4"/>
      <path d="M0 470 Q300 480 600 470 Q900 460 1130 470 V640 H0Z" fill="#7399c6"/>
      <path d="M300 470 Q420 490 560 520 L420 530 Z" fill="#5a84b6"/>
      <path d="M640 450 Q800 470 950 500 L800 520 Z" fill="#5a84b6"/>
      <g fill="#6f9bd0"><ellipse cx="398" cy="300" rx="32" ry="8"/><ellipse cx="594" cy="366" rx="33" ry="7"/><ellipse cx="645" cy="257" rx="29" ry="11"/><ellipse cx="1034" cy="362" rx="20" ry="7"/><ellipse cx="421" cy="307" rx="15" ry="6"/><ellipse cx="177" cy="324" rx="24" ry="8"/><ellipse cx="687" cy="336" rx="38" ry="8"/><ellipse cx="382" cy="313" rx="33" ry="10"/><ellipse cx="51" cy="319" rx="24" ry="6"/><ellipse cx="4" cy="375" rx="24" ry="10"/><ellipse cx="979" cy="243" rx="19" ry="10"/><ellipse cx="608" cy="274" rx="19" ry="12"/><ellipse cx="918" cy="290" rx="27" ry="8"/><ellipse cx="630" cy="233" rx="26" ry="10"/><ellipse cx="1065" cy="295" rx="26" ry="11"/><ellipse cx="585" cy="302" rx="17" ry="11"/><ellipse cx="337" cy="325" rx="30" ry="11"/><ellipse cx="372" cy="284" rx="38" ry="6"/><ellipse cx="566" cy="360" rx="36" ry="8"/><ellipse cx="1008" cy="270" rx="21" ry="11"/><ellipse cx="657" cy="403" rx="25" ry="10"/><ellipse cx="350" cy="299" rx="24" ry="10"/><ellipse cx="157" cy="316" rx="39" ry="7"/><ellipse cx="991" cy="370" rx="33" ry="6"/><ellipse cx="258" cy="363" rx="33" ry="11"/><ellipse cx="202" cy="257" rx="38" ry="8"/><ellipse cx="509" cy="251" rx="23" ry="8"/><ellipse cx="269" cy="248" rx="22" ry="10"/><ellipse cx="518" cy="399" rx="34" ry="6"/><ellipse cx="882" cy="345" rx="16" ry="9"/><ellipse cx="368" cy="377" rx="34" ry="12"/><ellipse cx="746" cy="234" rx="17" ry="10"/><ellipse cx="902" cy="287" rx="34" ry="9"/><ellipse cx="822" cy="331" rx="28" ry="8"/><ellipse cx="572" cy="363" rx="36" ry="11"/><ellipse cx="776" cy="259" rx="30" ry="11"/><ellipse cx="594" cy="300" rx="30" ry="11"/><ellipse cx="524" cy="298" rx="35" ry="7"/><ellipse cx="4" cy="306" rx="23" ry="7"/><ellipse cx="964" cy="380" rx="19" ry="11"/></g><g fill="#3f6ba0"><path d="M339 419 L335 424 L323 423 L327 418 L331 415Z"/><path d="M688 299 L682 301 L674 299 L669 294 L680 293Z"/><path d="M750 229 L744 232 L735 232 L733 226 L741 224Z"/><path d="M832 429 L824 433 L812 432 L810 425 L823 422Z"/><path d="M458 276 L454 277 L445 277 L445 274 L454 272Z"/><path d="M816 221 L812 224 L801 222 L804 220 L812 219Z"/><path d="M605 211 L602 214 L590 213 L596 210 L600 210Z"/><path d="M268 282 L263 285 L259 284 L256 280 L266 279Z"/><path d="M1142 411 L1126 417 L1114 414 L1107 405 L1125 405Z"/><path d="M76 359 L66 362 L57 362 L58 358 L69 357Z"/><path d="M30 419 L26 422 L19 420 L17 417 L28 416Z"/><path d="M1081 327 L1076 332 L1067 330 L1071 326 L1076 324Z"/><path d="M708 204 L698 205 L682 205 L687 196 L697 197Z"/><path d="M241 324 L230 330 L222 327 L219 321 L233 320Z"/><path d="M75 283 L72 287 L62 284 L61 282 L70 281Z"/><path d="M134 277 L130 280 L125 278 L124 276 L132 274Z"/><path d="M377 253 L375 256 L367 255 L365 250 L374 249Z"/><path d="M1049 382 L1038 386 L1030 387 L1029 382 L1041 381Z"/><path d="M360 399 L355 401 L351 400 L352 398 L357 397Z"/><path d="M188 355 L180 358 L172 356 L171 352 L178 351Z"/><path d="M783 408 L775 410 L770 409 L771 406 L778 404Z"/><path d="M516 366 L509 369 L506 367 L506 365 L510 363Z"/><path d="M730 320 L722 328 L704 326 L702 316 L721 315Z"/><path d="M271 373 L261 379 L247 375 L242 370 L258 367Z"/><path d="M694 306 L686 309 L678 307 L682 304 L688 303Z"/><path d="M684 280 L676 284 L669 281 L665 275 L681 273Z"/><path d="M863 294 L861 296 L855 296 L854 292 L862 293Z"/><path d="M622 346 L616 352 L600 348 L596 341 L611 341Z"/><path d="M1046 319 L1044 323 L1036 321 L1034 318 L1040 317Z"/><path d="M165 404 L162 407 L155 406 L153 402 L163 401Z"/><path d="M1084 281 L1072 285 L1065 284 L1064 279 L1075 275Z"/><path d="M917 326 L909 329 L902 327 L901 323 L912 323Z"/><path d="M292 266 L283 272 L276 269 L271 264 L284 263Z"/><path d="M940 235 L939 237 L933 236 L933 234 L939 232Z"/><path d="M990 386 L979 388 L968 390 L971 382 L983 380Z"/><path d="M608 394 L602 397 L587 396 L592 390 L606 389Z"/><path d="M876 317 L872 320 L863 318 L857 313 L873 312Z"/><path d="M1091 220 L1084 226 L1070 220 L1067 216 L1077 213Z"/><path d="M464 340 L453 344 L444 340 L439 335 L458 334Z"/><path d="M166 357 L151 358 L139 357 L144 353 L150 349Z"/><path d="M376 213 L371 219 L356 219 L357 209 L369 208Z"/><path d="M147 350 L141 356 L127 356 L121 349 L137 348Z"/><path d="M715 379 L706 383 L690 382 L689 375 L701 372Z"/><path d="M252 208 L246 211 L239 211 L241 207 L245 206Z"/><path d="M504 202 L500 204 L495 203 L494 201 L500 200Z"/><path d="M496 298 L492 301 L479 299 L483 296 L493 296Z"/><path d="M396 368 L385 374 L368 373 L371 364 L390 363Z"/><path d="M192 423 L186 426 L179 426 L182 423 L185 422Z"/><path d="M392 288 L379 295 L372 290 L364 284 L380 285Z"/><path d="M183 334 L180 336 L177 335 L175 333 L180 331Z"/><path d="M12 353 L10 358 L-0 357 L1 352 L8 352Z"/><path d="M498 353 L483 357 L470 357 L467 347 L488 345Z"/><path d="M456 371 L449 375 L435 376 L436 370 L445 369Z"/><path d="M918 216 L909 221 L893 217 L895 212 L905 212Z"/><path d="M282 337 L276 340 L263 338 L256 333 L273 329Z"/><path d="M734 362 L728 365 L722 364 L721 359 L733 357Z"/><path d="M479 226 L471 230 L458 227 L456 222 L470 222Z"/><path d="M71 304 L66 307 L57 305 L59 302 L68 299Z"/><path d="M260 212 L252 216 L237 214 L234 208 L258 205Z"/><path d="M646 422 L640 425 L632 424 L635 421 L639 421Z"/><path d="M1116 311 L1105 316 L1092 313 L1089 307 L1109 306Z"/><path d="M978 380 L971 384 L961 381 L963 377 L973 377Z"/><path d="M1098 278 L1092 281 L1084 278 L1083 274 L1094 273Z"/><path d="M278 295 L275 300 L253 298 L262 291 L276 288Z"/><path d="M872 279 L867 280 L861 280 L863 277 L868 277Z"/><path d="M276 357 L272 359 L266 359 L265 357 L270 356Z"/><path d="M688 398 L682 401 L670 400 L673 396 L682 395Z"/><path d="M1040 261 L1037 263 L1028 263 L1030 259 L1034 259Z"/><path d="M977 352 L971 356 L960 355 L960 351 L970 348Z"/><path d="M767 202 L755 205 L738 205 L733 198 L754 196Z"/><path d="M45 241 L39 245 L25 245 L24 239 L39 236Z"/><path d="M470 201 L464 204 L455 202 L453 198 L465 196Z"/><path d="M676 342 L670 344 L666 342 L665 340 L672 339Z"/><path d="M865 218 L864 224 L845 221 L850 216 L862 214Z"/><path d="M568 375 L562 379 L549 378 L553 374 L563 371Z"/><path d="M578 289 L573 290 L558 289 L558 285 L569 282Z"/><path d="M793 310 L789 312 L783 311 L785 309 L791 308Z"/><path d="M1018 223 L1017 225 L1010 223 L1011 221 L1017 220Z"/><path d="M651 424 L648 428 L638 426 L641 421 L647 422Z"/><path d="M1011 306 L1001 311 L988 311 L996 305 L1004 304Z"/><path d="M1035 336 L1029 338 L1026 337 L1023 333 L1031 332Z"/><path d="M283 390 L278 395 L268 393 L265 388 L277 385Z"/><path d="M63 303 L60 307 L55 304 L53 302 L59 301Z"/><path d="M1095 380 L1089 385 L1072 381 L1066 376 L1089 373Z"/><path d="M307 293 L302 295 L295 295 L293 292 L300 292Z"/><ellipse cx="155" cy="504" rx="14" ry="4"/><ellipse cx="251" cy="474" rx="20" ry="2"/><ellipse cx="44" cy="460" rx="17" ry="3"/><ellipse cx="1000" cy="509" rx="11" ry="3"/><ellipse cx="789" cy="527" rx="9" ry="4"/><ellipse cx="884" cy="542" rx="9" ry="2"/><ellipse cx="51" cy="503" rx="16" ry="2"/><ellipse cx="908" cy="492" rx="8" ry="3"/><ellipse cx="836" cy="441" rx="18" ry="3"/><ellipse cx="660" cy="520" rx="16" ry="4"/><ellipse cx="936" cy="484" rx="23" ry="4"/><ellipse cx="559" cy="484" rx="17" ry="5"/><ellipse cx="760" cy="491" rx="21" ry="4"/><ellipse cx="568" cy="486" rx="23" ry="4"/><ellipse cx="61" cy="449" rx="20" ry="2"/><ellipse cx="588" cy="459" rx="23" ry="5"/><ellipse cx="701" cy="470" rx="19" ry="3"/><ellipse cx="551" cy="449" rx="17" ry="2"/><ellipse cx="605" cy="512" rx="20" ry="5"/><ellipse cx="775" cy="532" rx="24" ry="3"/></g><g fill="#2a5283"><path d="M194 359 L188 364 L178 361 L181 357 L189 354Z"/><path d="M176 373 L164 380 L154 376 L155 368 L170 367Z"/><path d="M29 371 L29 373 L23 372 L22 369 L28 369Z"/><path d="M251 424 L240 429 L227 427 L229 420 L245 416Z"/><path d="M258 340 L255 343 L243 341 L245 338 L251 337Z"/><path d="M892 287 L878 291 L864 288 L867 282 L881 282Z"/><path d="M1067 256 L1059 259 L1049 260 L1053 255 L1059 253Z"/><path d="M733 234 L733 236 L724 235 L724 231 L730 232Z"/><path d="M292 420 L283 422 L277 422 L274 418 L285 418Z"/><path d="M878 382 L875 383 L872 383 L872 381 L875 380Z"/><path d="M219 341 L216 345 L206 343 L207 339 L218 339Z"/><path d="M780 362 L771 364 L763 364 L760 360 L770 359Z"/><path d="M985 360 L975 366 L957 364 L967 358 L972 357Z"/><path d="M781 259 L771 264 L762 262 L762 257 L775 252Z"/><path d="M466 307 L456 309 L446 307 L444 303 L459 302Z"/><path d="M574 209 L572 213 L561 212 L555 206 L568 206Z"/><path d="M1124 351 L1119 354 L1112 353 L1114 351 L1119 348Z"/><path d="M1012 216 L1008 218 L1004 217 L1001 215 L1007 215Z"/><path d="M208 362 L198 369 L191 365 L188 359 L201 358Z"/><path d="M449 417 L447 423 L427 420 L434 414 L448 412Z"/><path d="M245 430 L234 433 L228 433 L225 428 L238 426Z"/><path d="M492 348 L484 352 L471 351 L469 345 L481 344Z"/><path d="M678 386 L667 389 L655 389 L653 381 L668 382Z"/><path d="M990 328 L983 331 L975 330 L974 324 L986 324Z"/><path d="M857 287 L849 289 L841 288 L844 285 L851 284Z"/><path d="M125 342 L119 347 L109 347 L111 338 L118 336Z"/><path d="M1024 372 L1023 376 L1012 376 L1015 371 L1020 370Z"/><path d="M258 225 L251 229 L241 228 L243 224 L252 223Z"/><path d="M504 382 L495 389 L474 384 L480 377 L491 378Z"/><path d="M876 334 L872 337 L866 335 L867 332 L874 330Z"/><path d="M1041 268 L1036 269 L1031 268 L1032 266 L1039 264Z"/><path d="M432 399 L426 403 L418 401 L417 397 L424 396Z"/><path d="M487 246 L483 248 L477 248 L476 245 L482 244Z"/><path d="M797 407 L795 410 L788 408 L787 405 L794 405Z"/><path d="M289 429 L281 432 L273 431 L270 427 L281 425Z"/><path d="M997 407 L988 411 L973 408 L974 402 L987 402Z"/><path d="M62 363 L57 367 L48 367 L45 360 L60 360Z"/><path d="M1066 282 L1059 284 L1052 283 L1051 279 L1058 275Z"/><path d="M373 357 L368 360 L364 359 L363 355 L369 354Z"/><path d="M903 397 L898 401 L883 401 L890 394 L903 391Z"/><path d="M810 415 L807 417 L797 417 L798 412 L808 412Z"/><path d="M985 381 L979 387 L967 385 L965 379 L979 377Z"/><path d="M454 371 L446 376 L437 373 L438 370 L446 369Z"/><path d="M785 273 L777 278 L767 274 L764 268 L779 267Z"/><path d="M1080 243 L1072 248 L1058 247 L1055 237 L1073 238Z"/><path d="M214 245 L205 250 L194 248 L196 241 L206 238Z"/><path d="M202 337 L196 343 L184 341 L189 335 L199 331Z"/><path d="M893 426 L889 428 L883 427 L882 425 L891 423Z"/><path d="M662 233 L654 237 L643 236 L642 232 L651 231Z"/><path d="M880 370 L875 375 L862 375 L865 367 L879 365Z"/><path d="M362 394 L358 396 L349 394 L347 392 L356 391Z"/><path d="M867 233 L851 239 L843 236 L842 231 L852 227Z"/><path d="M385 291 L382 297 L364 294 L369 287 L378 285Z"/><path d="M531 374 L525 376 L521 375 L517 373 L527 372Z"/><path d="M584 237 L583 241 L572 239 L571 235 L582 231Z"/><path d="M563 345 L553 349 L538 349 L536 341 L550 340Z"/><path d="M1114 416 L1111 419 L1103 417 L1102 414 L1108 414Z"/><path d="M44 380 L38 383 L32 382 L31 378 L37 379Z"/><path d="M1112 299 L1109 300 L1100 300 L1100 297 L1109 296Z"/><path d="M1117 398 L1112 400 L1106 399 L1103 395 L1111 395Z"/><path d="M1011 387 L1000 391 L992 387 L989 383 L1005 381Z"/><path d="M430 356 L424 359 L416 358 L416 353 L426 353Z"/><path d="M278 356 L272 358 L261 358 L262 352 L270 353Z"/><path d="M118 240 L112 244 L103 243 L103 239 L111 239Z"/><path d="M727 306 L722 308 L717 306 L717 304 L722 303Z"/><path d="M978 283 L970 291 L953 287 L957 281 L967 281Z"/><path d="M75 233 L69 236 L63 235 L64 232 L70 231Z"/><path d="M327 286 L325 289 L317 287 L318 285 L324 283Z"/><path d="M497 295 L492 300 L476 299 L477 291 L491 292Z"/><path d="M393 208 L385 214 L376 211 L372 207 L385 206Z"/><path d="M836 344 L819 350 L803 347 L806 340 L823 341Z"/><path d="M315 410 L314 413 L307 412 L305 408 L313 408Z"/><path d="M472 390 L468 394 L455 392 L460 388 L466 386Z"/><path d="M319 353 L315 360 L303 356 L302 351 L314 349Z"/><path d="M1039 304 L1035 307 L1025 306 L1021 301 L1038 298Z"/><path d="M919 294 L914 297 L905 295 L908 291 L914 290Z"/><path d="M812 207 L811 210 L803 209 L803 206 L807 206Z"/><path d="M712 254 L706 259 L701 255 L695 250 L706 248Z"/><path d="M634 400 L628 403 L618 402 L611 396 L626 392Z"/><path d="M880 255 L872 257 L866 258 L863 253 L873 250Z"/><path d="M396 299 L392 301 L383 300 L383 295 L390 293Z"/><path d="M282 384 L276 390 L263 391 L262 381 L274 380Z"/><path d="M636 265 L630 267 L621 267 L620 264 L630 262Z"/><path d="M1065 224 L1063 228 L1053 225 L1049 220 L1065 219Z"/><path d="M988 213 L982 222 L966 220 L971 212 L978 209Z"/><path d="M864 408 L853 411 L844 410 L843 405 L852 406Z"/><path d="M258 220 L255 226 L242 225 L243 216 L252 217Z"/><path d="M1095 240 L1093 241 L1086 241 L1088 238 L1095 237Z"/><path d="M130 239 L125 241 L120 240 L118 237 L127 235Z"/><path d="M410 419 L401 424 L395 421 L393 418 L403 417Z"/><path d="M277 381 L270 388 L257 386 L258 377 L271 378Z"/><path d="M988 303 L982 306 L975 306 L974 302 L983 301Z"/><path d="M306 336 L299 339 L293 338 L291 333 L300 333Z"/><path d="M837 246 L827 250 L819 250 L816 241 L833 239Z"/><path d="M543 213 L536 217 L530 215 L532 213 L536 211Z"/><path d="M816 353 L804 360 L793 358 L794 351 L805 350Z"/><path d="M60 238 L54 241 L46 242 L47 236 L53 235Z"/><path d="M83 276 L74 281 L55 280 L60 275 L72 273Z"/><path d="M218 214 L213 222 L196 218 L202 211 L211 209Z"/><path d="M117 316 L112 319 L108 317 L107 316 L113 314Z"/><path d="M786 371 L783 373 L778 371 L776 370 L784 368Z"/><path d="M1124 211 L1116 217 L1109 213 L1108 207 L1115 207Z"/><path d="M1015 227 L1009 231 L1000 232 L1002 225 L1014 224Z"/><path d="M395 381 L387 383 L375 383 L375 376 L387 377Z"/><path d="M888 390 L875 396 L860 396 L858 390 L880 386Z"/><path d="M188 277 L179 280 L173 279 L175 275 L179 275Z"/><path d="M302 398 L297 399 L291 399 L290 396 L297 397Z"/><path d="M96 257 L88 261 L81 259 L76 256 L90 254Z"/><path d="M291 387 L289 389 L283 389 L285 386 L291 385Z"/><path d="M103 381 L94 386 L83 385 L83 380 L95 379Z"/><path d="M647 243 L636 246 L624 245 L630 242 L637 241Z"/><path d="M475 306 L471 307 L467 307 L468 305 L473 304Z"/><path d="M929 211 L915 216 L898 214 L900 206 L919 203Z"/><path d="M440 205 L435 206 L428 208 L429 203 L439 200Z"/><path d="M313 379 L303 384 L295 380 L296 377 L307 375Z"/><path d="M928 249 L919 251 L909 251 L913 248 L920 247Z"/><path d="M909 208 L901 212 L893 211 L894 208 L901 207Z"/><path d="M811 235 L804 241 L791 238 L791 232 L804 232Z"/><path d="M723 335 L715 340 L695 337 L703 332 L713 327Z"/><path d="M1044 425 L1037 429 L1027 428 L1029 424 L1037 424Z"/><path d="M170 225 L164 227 L158 227 L159 223 L165 224Z"/><path d="M405 321 L398 324 L394 323 L395 320 L399 319Z"/><path d="M217 297 L209 302 L194 298 L193 291 L203 292Z"/><path d="M815 400 L811 403 L794 401 L798 395 L808 395Z"/><path d="M806 361 L805 362 L798 361 L800 359 L804 358Z"/><path d="M541 411 L538 414 L532 413 L527 408 L540 409Z"/><path d="M735 346 L727 349 L720 348 L720 344 L727 344Z"/><path d="M795 327 L792 330 L781 328 L776 323 L787 320Z"/><path d="M1126 428 L1118 430 L1108 430 L1112 426 L1122 425Z"/><path d="M920 291 L908 294 L902 291 L903 288 L910 286Z"/><path d="M727 265 L713 271 L700 269 L705 264 L713 262Z"/><path d="M255 364 L254 367 L246 366 L246 363 L252 361Z"/><path d="M750 404 L747 407 L735 405 L739 401 L745 398Z"/><path d="M1126 257 L1121 261 L1113 259 L1110 256 L1124 253Z"/><path d="M243 203 L228 210 L221 204 L218 199 L228 199Z"/><path d="M529 278 L524 281 L518 279 L519 276 L524 275Z"/><path d="M255 397 L251 400 L247 399 L246 396 L253 395Z"/><path d="M938 201 L931 206 L922 205 L922 200 L933 198Z"/><path d="M1129 376 L1118 379 L1111 378 L1107 374 L1121 372Z"/><path d="M12 273 L6 276 L-2 276 L-1 272 L6 271Z"/><path d="M659 276 L647 279 L634 279 L634 271 L644 273Z"/><path d="M373 343 L368 346 L361 344 L361 342 L366 339Z"/><path d="M866 294 L860 299 L844 297 L843 293 L861 291Z"/><path d="M960 381 L958 384 L953 382 L952 380 L957 380Z"/><path d="M539 219 L532 225 L520 222 L522 218 L529 215Z"/><path d="M439 310 L428 316 L412 314 L420 307 L435 304Z"/><path d="M637 325 L629 328 L620 327 L619 322 L628 320Z"/><path d="M746 332 L742 337 L730 335 L731 329 L737 328Z"/><path d="M739 225 L737 227 L731 228 L733 224 L736 224Z"/><path d="M844 368 L839 371 L826 371 L832 365 L838 364Z"/><path d="M449 320 L443 322 L438 321 L433 318 L443 318Z"/><path d="M1054 293 L1050 295 L1045 295 L1043 291 L1049 290Z"/><path d="M888 278 L882 280 L875 279 L876 276 L882 276Z"/><path d="M627 411 L621 414 L608 412 L613 408 L620 404Z"/><path d="M481 360 L475 363 L469 362 L469 360 L474 357Z"/><path d="M405 409 L396 413 L384 411 L389 405 L399 403Z"/><path d="M743 201 L740 204 L729 203 L731 200 L739 199Z"/><path d="M498 398 L495 402 L483 401 L482 395 L494 393Z"/><path d="M1025 209 L1022 211 L1010 212 L1013 205 L1020 205Z"/><path d="M1097 302 L1087 304 L1074 302 L1074 297 L1089 294Z"/><path d="M673 424 L660 429 L643 428 L648 424 L658 419Z"/><path d="M963 221 L961 226 L948 223 L954 220 L961 218Z"/><path d="M309 340 L298 344 L288 341 L288 335 L304 334Z"/><path d="M974 362 L970 365 L964 363 L962 357 L973 358Z"/><path d="M525 210 L513 214 L507 213 L501 209 L519 206Z"/><path d="M92 390 L88 394 L68 393 L73 388 L89 383Z"/><path d="M1142 396 L1137 403 L1118 400 L1122 394 L1132 393Z"/><path d="M406 273 L400 276 L390 274 L392 271 L398 269Z"/><path d="M153 419 L149 420 L144 420 L144 417 L149 416Z"/><path d="M459 330 L452 334 L443 332 L441 329 L455 326Z"/><path d="M258 292 L249 294 L242 295 L241 289 L248 289Z"/><path d="M852 326 L848 329 L841 327 L840 323 L848 323Z"/><path d="M552 287 L549 290 L544 289 L543 286 L550 284Z"/><path d="M741 224 L738 228 L724 229 L724 220 L736 219Z"/><path d="M1092 324 L1080 326 L1064 328 L1063 320 L1075 315Z"/><path d="M15 343 L4 348 L-6 344 L-5 340 L4 336Z"/><path d="M428 210 L420 215 L412 212 L412 208 L419 206Z"/><path d="M769 323 L762 324 L754 323 L753 319 L766 316Z"/><path d="M117 384 L109 388 L104 385 L100 383 L111 382Z"/><path d="M859 397 L858 401 L849 398 L848 395 L858 394Z"/><path d="M173 301 L170 305 L162 302 L163 300 L169 298Z"/><path d="M646 407 L645 410 L638 408 L637 406 L644 405Z"/><path d="M375 385 L371 388 L363 387 L364 384 L370 382Z"/><path d="M159 402 L158 408 L145 405 L140 396 L155 394Z"/><path d="M766 409 L761 411 L754 410 L754 407 L761 405Z"/><path d="M358 397 L351 400 L334 398 L338 394 L347 393Z"/><path d="M288 367 L280 371 L273 368 L268 364 L282 365Z"/><path d="M745 390 L742 392 L736 392 L734 389 L740 387Z"/><path d="M414 354 L406 359 L395 357 L397 352 L403 352Z"/><path d="M713 331 L709 335 L696 333 L699 328 L705 327Z"/><path d="M438 257 L425 265 L412 260 L412 256 L427 253Z"/><path d="M984 310 L979 313 L972 313 L972 308 L979 307Z"/><path d="M63 391 L55 392 L46 392 L47 388 L55 388Z"/><path d="M1036 292 L1036 294 L1030 293 L1030 290 L1035 291Z"/><path d="M351 364 L348 366 L340 365 L343 363 L349 362Z"/><path d="M401 345 L398 349 L387 347 L380 342 L395 340Z"/><path d="M524 386 L521 388 L514 387 L514 384 L521 384Z"/><path d="M250 416 L243 423 L230 420 L226 415 L240 412Z"/><path d="M209 388 L202 393 L192 391 L195 387 L204 386Z"/><path d="M11 339 L2 342 L-9 341 L-3 338 L2 336Z"/><path d="M964 424 L964 428 L950 427 L952 421 L959 417Z"/><path d="M764 280 L757 286 L743 282 L743 275 L758 275Z"/><path d="M788 226 L779 231 L770 227 L771 223 L779 223Z"/><path d="M284 304 L279 306 L272 306 L273 302 L280 299Z"/><path d="M55 207 L50 211 L42 210 L44 207 L50 205Z"/><path d="M603 392 L596 398 L582 397 L584 391 L594 390Z"/><path d="M859 201 L855 204 L847 203 L848 200 L852 200Z"/><path d="M591 372 L586 376 L580 373 L579 371 L585 370Z"/><path d="M927 394 L923 395 L917 395 L916 391 L923 392Z"/><path d="M383 346 L366 355 L354 352 L353 341 L375 339Z"/><path d="M412 312 L407 316 L401 314 L399 311 L408 310Z"/><path d="M88 310 L86 312 L78 312 L77 307 L85 305Z"/><path d="M917 306 L908 312 L895 308 L893 302 L906 300Z"/><path d="M626 243 L623 246 L618 245 L617 243 L624 241Z"/><path d="M790 284 L785 288 L779 286 L778 282 L786 280Z"/><path d="M946 311 L940 313 L934 311 L935 309 L941 307Z"/><path d="M717 377 L712 381 L703 380 L700 376 L713 374Z"/><path d="M658 428 L645 432 L632 433 L630 427 L644 423Z"/><path d="M159 279 L153 282 L143 281 L144 278 L155 277Z"/><path d="M892 420 L888 423 L883 420 L880 418 L889 416Z"/><path d="M529 318 L528 319 L520 319 L523 317 L526 316Z"/><path d="M287 354 L283 356 L275 356 L276 353 L281 351Z"/><path d="M304 278 L296 281 L278 282 L282 273 L293 272Z"/><path d="M191 207 L183 214 L170 212 L170 203 L181 204Z"/><path d="M848 334 L838 336 L832 335 L832 330 L839 330Z"/><path d="M697 373 L693 378 L684 375 L681 371 L695 370Z"/><path d="M577 216 L575 222 L557 220 L557 212 L570 211Z"/><path d="M25 260 L23 264 L8 261 L7 257 L22 255Z"/><path d="M823 210 L822 212 L816 211 L816 209 L822 208Z"/><path d="M477 420 L474 423 L464 422 L470 419 L474 419Z"/><path d="M240 319 L232 323 L226 323 L224 317 L234 317Z"/><path d="M170 349 L167 352 L161 351 L161 347 L167 347Z"/><path d="M313 353 L305 357 L296 355 L291 351 L309 348Z"/><path d="M580 307 L574 313 L567 311 L566 306 L574 303Z"/><path d="M812 407 L807 408 L801 408 L803 405 L806 405Z"/></g><g fill="#8fb0d6"><ellipse cx="871" cy="457" rx="8" ry="3"/><ellipse cx="382" cy="473" rx="19" ry="4"/><ellipse cx="34" cy="514" rx="24" ry="5"/><ellipse cx="67" cy="460" rx="18" ry="3"/><ellipse cx="1032" cy="549" rx="24" ry="4"/><ellipse cx="134" cy="534" rx="23" ry="3"/><ellipse cx="515" cy="490" rx="10" ry="2"/><ellipse cx="558" cy="463" rx="21" ry="4"/><ellipse cx="226" cy="492" rx="22" ry="3"/><ellipse cx="657" cy="553" rx="11" ry="4"/><ellipse cx="631" cy="506" rx="10" ry="3"/><ellipse cx="665" cy="516" rx="13" ry="5"/><ellipse cx="83" cy="516" rx="10" ry="3"/><ellipse cx="641" cy="523" rx="12" ry="5"/><ellipse cx="254" cy="459" rx="18" ry="5"/><ellipse cx="135" cy="456" rx="10" ry="3"/><ellipse cx="835" cy="540" rx="18" ry="4"/><ellipse cx="286" cy="492" rx="9" ry="5"/><ellipse cx="29" cy="493" rx="10" ry="5"/><ellipse cx="527" cy="467" rx="14" ry="4"/><ellipse cx="915" cy="495" rx="10" ry="4"/><ellipse cx="838" cy="504" rx="15" ry="4"/><ellipse cx="920" cy="496" rx="13" ry="2"/><ellipse cx="365" cy="552" rx="13" ry="3"/><ellipse cx="216" cy="495" rx="23" ry="5"/><ellipse cx="1072" cy="499" rx="8" ry="4"/><ellipse cx="474" cy="546" rx="15" ry="2"/><ellipse cx="593" cy="473" rx="10" ry="4"/><ellipse cx="721" cy="483" rx="10" ry="3"/><ellipse cx="150" cy="539" rx="13" ry="3"/></g>
    </g>
  </g>
  <text x="161.3" y="82.6" font-family="Liberation Sans" font-weight="700" font-size="17" fill="#fff" textLength="95.3" lengthAdjust="spacingAndGlyphs">SIX STEPS TO</text>
  <text x="161.3" y="102.9" font-family="Liberation Sans" font-weight="700" font-size="17" fill="#fff" textLength="60.5" lengthAdjust="spacingAndGlyphs">HEAVEN</text>
  <rect x="157.5" y="106.5" width="111.5" height="1" fill="#fff"/>
  <text x="161.3" y="117" font-family="Liberation Sans" font-size="7" fill="#e8eef6" textLength="49.4" lengthAdjust="spacingAndGlyphs">How to get there</text>
  <text x="222.2" y="157.6" font-family="Liberation Sans" font-weight="700" font-size="6.2" fill="#2b4a78" textLength="17" lengthAdjust="spacingAndGlyphs">ALPINE</text>
  <text x="240.5" y="157.6" font-family="Liberation Sans" font-weight="700" font-size="6.2" fill="#1a1a2a" textLength="27" lengthAdjust="spacingAndGlyphs">SKI HOUSE</text>
  <text x="276.5" y="157.2" font-family="Liberation Sans" font-size="4" fill="#333">2</text>
 </g>
 <rect x="0.5" y="0.5" width="288" height="162" rx="4.5" fill="none" stroke="#6a6a6a" stroke-width="1"/>
</svg>
<div class="a" style="left:354.5px;top:372px;font-size:16px;color:#e4e4e4">2</div>

<!-- ========== SLIDE 3 ========== -->
<svg style="left:678.9px;top:199.6px" width="289" height="163" viewBox="0 0 289 163">
 <g clip-path="url(#rr)">
  <rect width="289" height="163" fill="#f1f1f2"/>
  <rect width="289" height="163" fill="#fff" filter="url(#noise)" opacity="0.15"/>
  <g transform="translate(-0.9,-0.6) scale(0.2577)">
    <clipPath id="p3"><path d="M0 0 H598 V100 L584 120 V300 L575 330 V425 L536 425 V540 Q536 557 520 557 H490 Q473 557 473 540 V515 Q473 520 460 520 H425 Q413 520 413 505 V400 L359 395 V330 L347 340 V490 Q347 506 330 506 H285 Q270 506 270 490 V395 L264 395 V495 Q264 512 248 512 H202 Q186 512 186 495 V395 L171 395 V462 Q171 479 155 479 H106 Q90 479 90 462 V395 L84 395 V425 Q84 440 68 440 H40 Q24 440 24 425 V340 L12 311 V300 H0Z"/></clipPath>
    <g clip-path="url(#p3)">
      <rect x="0" y="0" width="600" height="640" fill="url(#sky3)"/>
      <path d="M420 30 Q520 20 600 40 V70 Q500 60 420 55Z" fill="#a7bcd6"/>
      <path d="M0 90 Q150 80 300 120 Q450 150 600 140 V170 Q400 170 0 130Z" fill="#cbd9ea"/>
      <path d="M0 335 Q100 325 200 340 L300 350 L380 345 L430 360 L479 345 L540 370 L600 372 V640 H0Z" fill="#d4e0ee"/>
      <path d="M400 370 L479 347 L540 375 L575 380 V400 L420 410Z" fill="#f4f7fb"/>
      <path d="M0 395 Q150 380 300 395 Q450 400 600 390 V640 H0Z" fill="#5d8ac2"/>
      <path d="M0 420 Q150 410 300 425 Q450 430 600 420 V640 H0Z" fill="#2f64a8"/>
      <path d="M473 520 H540 V560 H473Z" fill="#c5d5e8"/>
    </g>
    <!-- chairlift -->
    <path d="M165 0 Q158 60 200 100" stroke="#a8b0ba" stroke-width="12" fill="none"/>
    <path d="M165 0 Q158 60 200 100" stroke="#3a6aa8" stroke-width="3" fill="none" opacity="0.6"/>
    <path d="M126 100 L345 108 L345 145 L126 140Z" fill="#e4e8ee"/>
    <path d="M126 132 L345 140 L345 150 L126 145Z" fill="#6a7078"/>
    <circle cx="240" cy="115" r="5" fill="#555"/><circle cx="262" cy="120" r="6" fill="#333"/>
    <path d="M93 141 Q86 210 104 273 M356 141 Q430 200 420 284 M126 191 L400 202 M126 150 Q110 230 118 280 M150 192 Q168 215 163 235 M230 140 L252 190 M330 150 L346 240 M175 150 L180 190" stroke="#5e636a" stroke-width="5" fill="none"/>
    <path d="M109 268 L411 275 L405 328 L109 322Z" fill="#c9ced6"/>
    <path d="M120 280 L400 286 L398 320 L120 315Z" fill="#2a2c30" opacity="0.35"/>
    <path d="M49 317 L411 330 M49 328 L126 290 M334 284 L411 284 L411 350 L360 350Z" stroke="#1c1c1e" stroke-width="8" fill="none"/>
    <path d="M340 290 L405 292 L402 345 L365 345Z" fill="#222"/>
    <!-- person 1 -->
    <circle cx="208" cy="232" r="17" fill="#1a1a1c"/>
    <path d="M175 250 L240 255 L245 310 L200 320 L160 320 L165 270Z" fill="#18181a"/>
    <path d="M150 310 L200 315 L180 370 L150 410 L125 395 L140 350Z" fill="#141416"/>
    <path d="M130 360 L160 355 L175 445 L148 452Z" fill="#e2c4c0"/>
    <!-- person 2 -->
    <circle cx="283" cy="232" r="15" fill="#e8eef6"/>
    <path d="M260 250 L300 245 L318 300 L300 325 L262 320Z" fill="#3c3048"/>
    <path d="M265 258 L300 262 L310 300 L270 300Z" fill="#c84a6a"/>
    <path d="M290 290 L305 320 L280 325Z" fill="#3a78c8"/>
    <path d="M210 320 L285 300 L292 330 L250 350 L240 370 L205 370Z" fill="#d8c040"/>
    <path d="M215 370 L265 380 L235 455 L200 445Z" fill="#8fb4d8"/>
    <path d="M200 420 L240 430 L230 455 L200 445Z" fill="#4a4a4a"/>
  </g>
  <text x="161.1" y="63.8" font-family="Liberation Sans" font-weight="700" font-size="17" fill="#161616" textLength="53" lengthAdjust="spacingAndGlyphs">STEP 1:</text>
  <text x="161.1" y="84.2" font-family="Liberation Sans" font-weight="700" font-size="17" fill="#161616" textLength="81.3" lengthAdjust="spacingAndGlyphs">POSTPONE</text>
  <rect x="157.3" y="88.3" width="111.7" height="1" fill="#4f7fc0"/>
  <text x="161.1" y="98.2" font-family="Liberation Sans" font-size="6.5" fill="#6a6a6a" textLength="61" lengthAdjust="spacingAndGlyphs">SUBTITLE GOES HERE</text>
  <text x="222.2" y="157.6" font-family="Liberation Sans" font-weight="700" font-size="6.2" fill="#2b4a78" textLength="17" lengthAdjust="spacingAndGlyphs">ALPINE</text>
  <text x="240.5" y="157.6" font-family="Liberation Sans" font-weight="700" font-size="6.2" fill="#1a1a2a" textLength="27" lengthAdjust="spacingAndGlyphs">SKI HOUSE</text>
  <text x="276.5" y="157.2" font-family="Liberation Sans" font-size="4" fill="#333">3</text>
 </g>
 <rect x="0.5" y="0.5" width="288" height="162" rx="4.5" fill="none" stroke="#6a6a6a" stroke-width="1"/>
</svg>
<div class="a" style="left:679.5px;top:372px;font-size:16px;color:#e4e4e4">3</div>

<!-- ========== SLIDE 4 ========== -->
<svg style="left:28.5px;top:414.4px" width="289" height="163" viewBox="0 0 289 163">
 <g clip-path="url(#rr)">
  <rect width="289" height="163" fill="#ffffff"/>
  <rect x="122.3" width="167" height="163" fill="#f1f1f2"/>
  <rect x="122.3" width="167" height="163" fill="#fff" filter="url(#noise)" opacity="0.15"/>
  <g transform="translate(131.5,-0.4) scale(0.2577)">
    <g stroke-linecap="round" fill="none">
      <path d="M150 150 L300 95" stroke="#2f88d2" stroke-width="60"/>
      <path d="M240 110 L430 150" stroke="#2f88d2" stroke-width="90"/>
      <path d="M300 75 L540 255" stroke="#4a5058" stroke-width="70"/>
      <path d="M290 65 L530 240" stroke="#8a9098" stroke-width="4"/><path d="M310 95 L545 270" stroke="#9aa0a8" stroke-width="3"/><path d="M330 60 L520 215" stroke="#2f3338" stroke-width="10"/><path d="M300 110 L480 245" stroke="#2f3338" stroke-width="12"/>
      <path d="M90 250 L470 300" stroke="#2f88d2" stroke-width="110"/>
      <path d="M50 370 L480 350" stroke="#3590d6" stroke-width="90"/>
      <path d="M80 450 L140 545" stroke="#d6e2ee" stroke-width="70"/>
      <path d="M60 420 L200 470" stroke="#2f88d2" stroke-width="70"/>
      <path d="M210 450 L230 500" stroke="#b87a50" stroke-width="70"/>
      <path d="M280 480 L300 510" stroke="#2f88d2" stroke-width="65"/>
      <path d="M370 420 L420 450" stroke="#2f88d2" stroke-width="55"/>
      <path d="M500 310 L520 350" stroke="#2f88d2" stroke-width="55"/>
      <path d="M470 230 L530 260" stroke="#3590d6" stroke-width="45"/>
    </g>
    <g fill="#e8f0f6" opacity="0.85">
      <circle cx="120" cy="420" r="14"/><circle cx="90" cy="470" r="10"/><circle cx="300" cy="130" r="12"/><circle cx="260" cy="160" r="8"/>
      <circle cx="440" cy="420" r="9"/><circle cx="380" cy="140" r="8"/><circle cx="160" cy="470" r="8"/><circle cx="70" cy="400" r="9"/>
    </g>
    <!-- goggles -->
    <path d="M45 290 L72 228 L100 140 L180 132 L225 140 L278 172 L302 232 L292 280 L232 282 L192 302 L182 372 L120 382 L58 362Z" fill="#1c1a1c"/>
    <path d="M122 152 L208 142 L272 178 L298 236 L262 268 L205 255 L145 212Z" fill="#d8782c"/>
    <path d="M150 160 L210 150 L255 185 L240 215 L190 200Z" fill="#f0b060"/>
    <path d="M65 245 L115 225 L150 250 L175 300 L170 365 L120 375 L70 355 L55 300Z" fill="#5a1f14"/>
    <path d="M85 260 L110 250 L150 330 L135 360Z" fill="#c84a20"/>
    <!-- phones -->
    <path d="M292 242 L352 185 L505 345 L445 382Z" fill="#26282c" stroke="#9ea2a8" stroke-width="8"/>
    <path d="M170 392 L352 270 L432 382 L252 502Z" fill="#1e1f22" stroke="#b8bcc2" stroke-width="6"/>
  </g>
  <text x="14.8" y="45.6" font-family="Liberation Sans" font-weight="700" font-size="10.7" fill="#161616" textLength="74.8" lengthAdjust="spacingAndGlyphs">STEP 2: PREPARE</text>
  <rect x="14.8" y="52.3" width="92.8" height="0.9" fill="#4a74ad"/>
  <text x="14.8" y="63.8" font-family="Liberation Sans" font-size="4.6" fill="#777" textLength="92.8" lengthAdjust="spacingAndGlyphs">Lorem ipsum dolor sit amet, consectetur</text>
  <text x="14.8" y="69.7" font-family="Liberation Sans" font-size="4.6" fill="#777" textLength="92.8" lengthAdjust="spacingAndGlyphs">adipiscing elit. Ut gravida eros erat. Proin a</text>
  <text x="14.8" y="75.6" font-family="Liberation Sans" font-size="4.6" fill="#777" textLength="92.8" lengthAdjust="spacingAndGlyphs">tellus sed risus lobortis sagittis eu quis est. Duis</text>
  <text x="14.8" y="81.5" font-family="Liberation Sans" font-size="4.6" fill="#777" textLength="92.8" lengthAdjust="spacingAndGlyphs">ut aliquam nisi. Suspendisse vehicula mi diam,</text>
  <text x="14.8" y="87.4" font-family="Liberation Sans" font-size="4.6" fill="#777" textLength="92.8" lengthAdjust="spacingAndGlyphs">sit amet lacinia massa sodales ac. Fusce</text>
  <text x="14.8" y="93.3" font-family="Liberation Sans" font-size="4.6" fill="#777" textLength="75.5" lengthAdjust="spacingAndGlyphs">condimentum egestas nunc a maximus.</text>
  <text x="14.8" y="105.4" font-family="Liberation Sans" font-size="4.6" fill="#777" textLength="92.8" lengthAdjust="spacingAndGlyphs">Quisque et orci purus. Proin dolor mi, ultrices</text>
  <text x="14.8" y="111.4" font-family="Liberation Sans" font-size="4.6" fill="#777" textLength="92.8" lengthAdjust="spacingAndGlyphs">sit amet ipsum placerat, congue mattis turpis.</text>
  <text x="14.8" y="117.5" font-family="Liberation Sans" font-size="4.6" fill="#777" textLength="92.8" lengthAdjust="spacingAndGlyphs">Donec vestibulum eros eget mauris dignissim,</text>
  <text x="14.8" y="123.6" font-family="Liberation Sans" font-size="4.6" fill="#777" textLength="92.8" lengthAdjust="spacingAndGlyphs">ut ultrices dolor viverra. Phasellus efficitur ante</text>
  <text x="14.8" y="129.6" font-family="Liberation Sans" font-size="4.6" fill="#777" textLength="81.8" lengthAdjust="spacingAndGlyphs">nec sem convallis, in ornare est accumsan.</text>
  <text x="222.2" y="157.6" font-family="Liberation Sans" font-weight="700" font-size="6.2" fill="#2b4a78" textLength="17" lengthAdjust="spacingAndGlyphs">ALPINE</text>
  <text x="240.5" y="157.6" font-family="Liberation Sans" font-weight="700" font-size="6.2" fill="#1a1a2a" textLength="27" lengthAdjust="spacingAndGlyphs">SKI HOUSE</text>
  <text x="276.5" y="157.2" font-family="Liberation Sans" font-size="4" fill="#333">4</text>
 </g>
 <rect x="0.5" y="0.5" width="288" height="162" rx="4.5" fill="none" stroke="#6a6a6a" stroke-width="1"/>
</svg>
<div class="a" style="left:29.5px;top:588px;font-size:16px;color:#e4e4e4">4</div>

<!-- ========== SLIDE 5 ========== -->
<svg style="left:353.7px;top:414.4px" width="289" height="163" viewBox="0 0 289 163">
 <g clip-path="url(#rr)">
  <rect width="289" height="163" fill="#ffffff"/>
  <rect x="0" width="166.2" height="163" fill="#f1f1f2"/>
  <rect x="0" width="166.2" height="163" fill="#fff" filter="url(#noise)" opacity="0.15"/>
  <g transform="translate(-0.7,-0.4) scale(0.2577)">
    <clipPath id="p5"><path d="M78 20 Q80 12 105 12 Q130 12 145 30 L152 70 L155 95 L205 95 L210 100 L225 88 L268 92 L280 130 L292 82 L340 76 L360 80 L395 100 L410 96 L455 100 L462 80 L505 76 L525 85 L532 200 L540 225 L552 220 L560 300 L552 430 L555 540 L520 560 L515 600 L470 625 L420 615 L405 550 L385 545 L372 590 L318 600 L300 565 L290 580 L250 585 L240 545 L195 575 L165 520 L130 535 L122 592 L78 592 L72 400Z"/></clipPath>
    <g clip-path="url(#p5)">
      <rect x="0" y="0" width="600" height="640" fill="url(#trees)"/>
      
      <path d="M60 0 H170 L150 300 L60 330Z" fill="#1c4678" opacity="0.25"/>
      <path d="M70 320 Q200 300 330 345 Q450 385 580 400 V440 Q420 455 300 425 Q180 395 70 385Z" fill="#d4e3f3" opacity="0.55"/>
      <path d="M85 390 Q140 450 180 560 L130 580 Q110 480 70 420Z" fill="#c8dbf0" opacity="0.6"/>
      <path d="M300 440 Q420 470 580 455 V520 Q450 540 380 520Z" fill="#c3d6ee" opacity="0.5"/>
    </g>
  </g>
  <text x="181.3" y="45.6" font-family="Liberation Sans" font-weight="700" font-size="10.7" fill="#161616" textLength="72.3" lengthAdjust="spacingAndGlyphs">STEP 3: PICTURE</text>
  <rect x="181.3" y="52.3" width="93.7" height="0.9" fill="#4a74ad"/>
  <text x="181.3" y="63.8" font-family="Liberation Sans" font-size="4.6" fill="#777" textLength="93.7" lengthAdjust="spacingAndGlyphs">Lorem ipsum dolor sit amet, consectetur</text>
  <text x="181.3" y="69.7" font-family="Liberation Sans" font-size="4.6" fill="#777" textLength="93.7" lengthAdjust="spacingAndGlyphs">adipiscing elit. Ut gravida eros erat. Proin a</text>
  <text x="181.3" y="75.6" font-family="Liberation Sans" font-size="4.6" fill="#777" textLength="93.7" lengthAdjust="spacingAndGlyphs">tellus sed risus lobortis sagittis eu quis est. Duis</text>
  <text x="181.3" y="81.5" font-family="Liberation Sans" font-size="4.6" fill="#777" textLength="93.7" lengthAdjust="spacingAndGlyphs">ut aliquam nisi. Suspendisse vehicula mi diam,</text>
  <text x="181.3" y="87.4" font-family="Liberation Sans" font-size="4.6" fill="#777" textLength="93.7" lengthAdjust="spacingAndGlyphs">sit amet lacinia massa sodales ac. Fusce</text>
  <text x="181.3" y="93.3" font-family="Liberation Sans" font-size="4.6" fill="#777" textLength="77.0" lengthAdjust="spacingAndGlyphs">condimentum egestas nunc a maximus.</text>
  <text x="181.3" y="105.4" font-family="Liberation Sans" font-size="4.6" fill="#777" textLength="93.7" lengthAdjust="spacingAndGlyphs">Quisque et orci purus. Proin dolor mi, ultrices</text>
  <text x="181.3" y="111.4" font-family="Liberation Sans" font-size="4.6" fill="#777" textLength="93.7" lengthAdjust="spacingAndGlyphs">sit amet ipsum placerat, congue mattis turpis.</text>
  <text x="181.3" y="117.5" font-family="Liberation Sans" font-size="4.6" fill="#777" textLength="93.7" lengthAdjust="spacingAndGlyphs">Donec vestibulum eros eget mauris dignissim,</text>
  <text x="181.3" y="123.6" font-family="Liberation Sans" font-size="4.6" fill="#777" textLength="93.7" lengthAdjust="spacingAndGlyphs">ut ultrices dolor viverra. Phasellus efficitur ante</text>
  <text x="181.3" y="129.6" font-family="Liberation Sans" font-size="4.6" fill="#777" textLength="83.0" lengthAdjust="spacingAndGlyphs">nec sem convallis, in ornare est accumsan.</text>
  <text x="222.2" y="157.6" font-family="Liberation Sans" font-weight="700" font-size="6.2" fill="#2b4a78" textLength="17" lengthAdjust="spacingAndGlyphs">ALPINE</text>
  <text x="240.5" y="157.6" font-family="Liberation Sans" font-weight="700" font-size="6.2" fill="#1a1a2a" textLength="27" lengthAdjust="spacingAndGlyphs">SKI HOUSE</text>
  <text x="276.5" y="157.2" font-family="Liberation Sans" font-size="4" fill="#333">5</text>
 </g>
 <rect x="0.5" y="0.5" width="288" height="162" rx="4.5" fill="none" stroke="#6a6a6a" stroke-width="1"/>
</svg>
<div class="a" style="left:354.5px;top:588px;font-size:16px;color:#e4e4e4">5</div>

<!-- ========== SLIDE 6 ========== -->
<svg style="left:678.9px;top:414.4px" width="289" height="163" viewBox="0 0 289 163">
 <g clip-path="url(#rr)">
  <rect width="289" height="163" fill="#ffffff"/>
  <rect x="0" y="32.4" width="289" height="3" fill="#ebebed"/>
  <text x="22.2" y="21.9" font-family="Liberation Sans" font-weight="700" font-size="9.9" fill="#161616" textLength="94.7" lengthAdjust="spacingAndGlyphs">STEP 4: PREVARICATE</text>
  <text x="22.2" y="53.1" font-family="Liberation Sans" font-weight="700" font-size="6.6" fill="#1a1a1a" textLength="61.4" lengthAdjust="spacingAndGlyphs">COMPARISON POINT 1</text>
  <text x="152.6" y="53.1" font-family="Liberation Sans" font-weight="700" font-size="6.6" fill="#1a1a1a" textLength="62" lengthAdjust="spacingAndGlyphs">COMPARISON POINT 2</text>
  <rect x="22.2" y="55.2" width="116.4" height="0.8" fill="#7a8aa0"/>
  <rect x="22.2" y="55.2" width="60" height="0.8" fill="#4f7fc0"/>
  <rect x="150.9" y="55.2" width="118.1" height="0.8" fill="#7a8aa0"/>
  <rect x="150.9" y="55.2" width="60" height="0.8" fill="#4f7fc0"/>
  <text x="22.2" y="65.0" font-family="Liberation Sans" font-size="4.5" fill="#777" textLength="114.0" lengthAdjust="spacingAndGlyphs">Lorem ipsum dolor sit amet, consectetur adipiscing elit. Ut</text>
  <text x="22.2" y="70.8" font-family="Liberation Sans" font-size="4.5" fill="#777" textLength="114.0" lengthAdjust="spacingAndGlyphs">gravida eros erat. Proin a tellus sed risus lobortis sagittis eu</text>
  <text x="22.2" y="76.7" font-family="Liberation Sans" font-size="4.5" fill="#777" textLength="105.0" lengthAdjust="spacingAndGlyphs">quis est. Duis ut aliquam nisi. Suspendisse vehicula mi</text>
  <text x="22.2" y="82.5" font-family="Liberation Sans" font-size="4.5" fill="#777" textLength="92.0" lengthAdjust="spacingAndGlyphs">diam, sit amet lacinia massa sodales ac. Fusce</text>
  <text x="22.2" y="88.4" font-family="Liberation Sans" font-size="4.5" fill="#777" textLength="108.0" lengthAdjust="spacingAndGlyphs">condimentum egestas nunc a maximus. Quisque et orci</text>
  <text x="22.2" y="94.2" font-family="Liberation Sans" font-size="4.5" fill="#777" textLength="112.0" lengthAdjust="spacingAndGlyphs">purus. Proin dolor mi, ultrices sit amet ipsum placerat,</text>
  <text x="22.2" y="100.1" font-family="Liberation Sans" font-size="4.5" fill="#777" textLength="112.0" lengthAdjust="spacingAndGlyphs">congue mattis turpis. Donec vestibulum eros eget mauris</text>
  <text x="22.2" y="105.9" font-family="Liberation Sans" font-size="4.5" fill="#777" textLength="114.0" lengthAdjust="spacingAndGlyphs">dignissim, ut ultrices dolor viverra. Phasellus efficitur ante</text>
  <text x="22.2" y="111.8" font-family="Liberation Sans" font-size="4.5" fill="#777" textLength="80.7" lengthAdjust="spacingAndGlyphs">nec sem convallis, in ornare est accumsan.</text>
  <text x="152.6" y="65.0" font-family="Liberation Sans" font-size="4.5" fill="#777" textLength="114.0" lengthAdjust="spacingAndGlyphs">Lorem ipsum dolor sit amet, consectetur adipiscing elit. Ut</text>
  <text x="152.6" y="70.8" font-family="Liberation Sans" font-size="4.5" fill="#777" textLength="114.0" lengthAdjust="spacingAndGlyphs">gravida eros erat. Proin a tellus sed risus lobortis sagittis eu</text>
  <text x="152.6" y="76.7" font-family="Liberation Sans" font-size="4.5" fill="#777" textLength="105.0" lengthAdjust="spacingAndGlyphs">quis est. Duis ut aliquam nisi. Suspendisse vehicula mi</text>
  <text x="152.6" y="82.5" font-family="Liberation Sans" font-size="4.5" fill="#777" textLength="92.0" lengthAdjust="spacingAndGlyphs">diam, sit amet lacinia massa sodales ac. Fusce</text>
  <text x="152.6" y="88.4" font-family="Liberation Sans" font-size="4.5" fill="#777" textLength="108.0" lengthAdjust="spacingAndGlyphs">condimentum egestas nunc a maximus. Quisque et orci</text>
  <text x="152.6" y="94.2" font-family="Liberation Sans" font-size="4.5" fill="#777" textLength="112.0" lengthAdjust="spacingAndGlyphs">purus. Proin dolor mi, ultrices sit amet ipsum placerat,</text>
  <text x="152.6" y="100.1" font-family="Liberation Sans" font-size="4.5" fill="#777" textLength="112.0" lengthAdjust="spacingAndGlyphs">congue mattis turpis. Donec vestibulum eros eget mauris</text>
  <text x="152.6" y="105.9" font-family="Liberation Sans" font-size="4.5" fill="#777" textLength="114.0" lengthAdjust="spacingAndGlyphs">dignissim, ut ultrices dolor viverra. Phasellus efficitur ante</text>
  <text x="152.6" y="111.8" font-family="Liberation Sans" font-size="4.5" fill="#777" textLength="80.7" lengthAdjust="spacingAndGlyphs">nec sem convallis, in ornare est accumsan.</text>
  <text x="222.2" y="157.6" font-family="Liberation Sans" font-weight="700" font-size="6.2" fill="#2b4a78" textLength="17" lengthAdjust="spacingAndGlyphs">ALPINE</text>
  <text x="240.5" y="157.6" font-family="Liberation Sans" font-weight="700" font-size="6.2" fill="#1a1a2a" textLength="27" lengthAdjust="spacingAndGlyphs">SKI HOUSE</text>
  <text x="276.5" y="157.2" font-family="Liberation Sans" font-size="4" fill="#333">6</text>
 </g>
 <rect x="0.5" y="0.5" width="288" height="162" rx="4.5" fill="none" stroke="#6a6a6a" stroke-width="1"/>
</svg>
<div class="a" style="left:679.5px;top:588px;font-size:16px;color:#e4e4e4">6</div>
</div>

<!-- SCROLLBAR -->
<div style="position:absolute;left:1006px;top:181px;width:16px;height:430px;background:#1c1c1c;border-radius:8px"></div>
<svg style="left:1009px;top:185px" width="10" height="8" viewBox="0 0 10 8"><path d="M0 8 L5 0 L10 8Z" fill="#9a9a9a"/></svg>
<div style="position:absolute;left:1010px;top:197px;width:9px;height:194px;background:#a3a3a8;border-radius:4.5px"></div>
<svg style="left:1009px;top:601px" width="10" height="8" viewBox="0 0 10 8"><path d="M0 0 L5 8 L10 0Z" fill="#9a9a9a"/></svg>

<!-- STATUS BAR -->
<div style="position:absolute;left:0;top:613px;width:1024px;height:23px;background:#1c1b1c;border-top:1px solid #444"></div>
<div id="status">
<div class="a" style="left:13.5px;top:619px;font-size:11.5px;letter-spacing:-0.1px">Slide 7 of 11</div>
<div class="a" style="left:95px;top:619px;font-size:11.5px;letter-spacing:-0.15px">"Office Theme"</div>
<svg style="left:189px;top:617px" width="16" height="14" viewBox="0 0 16 14">
  <path d="M1.5 1.5 Q5 0.5 7.8 2.5 V12.5 Q5 10.8 1.5 11.5Z M7.8 2.5 Q10.5 0.5 14 1.5 V7" stroke="#e0e0e0" stroke-width="1.2" fill="none"/>
  <path d="M9.5 10 L11.2 12 L14.5 8.3" stroke="#e0e0e0" stroke-width="1.2" fill="none"/>
</svg>
<div class="a" style="left:222px;top:619px;font-size:11.5px;letter-spacing:-0.1px">English (India)</div>
<svg style="left:353px;top:616px" width="17" height="16" viewBox="0 0 17 16">
  <circle cx="7" cy="2.5" r="1.7" stroke="#e0e0e0" stroke-width="1.1" fill="none"/>
  <path d="M1 5.5 Q7 7 13 5.5 M7 6.5 V10 L4 15 M7 10 L9 12" stroke="#e0e0e0" stroke-width="1.2" fill="none"/>
  <path d="M10.5 10.5 L15.5 15.5 M15.5 10.5 L10.5 15.5" stroke="#e0e0e0" stroke-width="1.2"/>
</svg>
<div class="a" style="left:372.5px;top:619px;font-size:11px;font-weight:700;letter-spacing:-0.35px">Accessibility: Investigate</div>

<svg style="left:660px;top:617px" width="16" height="14" viewBox="0 0 16 14">
  <rect x="1.5" y="1.5" width="13" height="11.5" stroke="#e6e6e6" stroke-width="1.3" fill="none"/>
  <path d="M4.3 1.5 V10 H14.5" stroke="#e6e6e6" stroke-width="1.2" fill="none"/>
  <rect x="7" y="4" width="4.5" height="3" stroke="#e6e6e6" stroke-width="1.1" fill="none"/>
</svg>
<div style="position:absolute;left:688px;top:614px;width:40px;height:21px;background:#2c2c2c"></div>
<svg style="left:700px;top:617px" width="16" height="14" viewBox="0 0 16 14">
  <rect x="1.3" y="1.5" width="5.5" height="4.3" stroke="#e6e6e6" stroke-width="1.2" fill="none"/>
  <rect x="9.3" y="1.5" width="5.5" height="4.3" stroke="#e6e6e6" stroke-width="1.2" fill="none"/>
  <rect x="1.3" y="8.5" width="5.5" height="4.3" stroke="#e6e6e6" stroke-width="1.2" fill="none"/>
  <rect x="9.3" y="8.5" width="5.5" height="4.3" stroke="#e6e6e6" stroke-width="1.2" fill="none"/>
</svg>
<svg style="left:740px;top:616px" width="16" height="15" viewBox="0 0 16 15">
  <path d="M1.5 2 Q5 1 7.8 2.5 Q10.8 1 14.3 2 V12.5 Q10.8 11.5 7.8 13 Q5 11.5 1.5 12.5Z M7.8 2.5 V13" stroke="#e6e6e6" stroke-width="1.2" fill="none"/>
  <path d="M3.5 5H6M3.5 7.5H6M3.5 10H6M9.5 5H12.3M9.5 7.5H12.3M9.5 10H12.3" stroke="#e6e6e6" stroke-width="1"/>
</svg>
<svg style="left:780px;top:616px" width="15" height="15" viewBox="0 0 15 15">
  <path d="M1 1.5H14M2.5 1.5V9H12.5V1.5M7.5 9V13.5M4.5 13.8H10.5M5 4.7H10" stroke="#e6e6e6" stroke-width="1.2" fill="none"/>
</svg>
<div style="position:absolute;left:814px;top:623.5px;width:8px;height:1.2px;background:#d8d8d8"></div>
<div style="position:absolute;left:827px;top:623.5px;width:100px;height:1px;background:#8a8a8a"></div>
<div style="position:absolute;left:868.5px;top:618px;width:5px;height:12px;background:#b0b0b0"></div>
<div style="position:absolute;left:877px;top:621px;width:1px;height:6px;background:#8a8a8a"></div>
<svg style="left:931px;top:619px" width="10" height="10" viewBox="0 0 10 10"><path d="M5 0.5V9.5M0.5 5H9.5" stroke="#d8d8d8" stroke-width="1.2"/></svg>
<div class="a" style="left:953px;top:619px;font-size:11px;letter-spacing:-0.4px">90%</div>
<svg style="left:990px;top:615px" width="17" height="18" viewBox="0 0 17 18">
  <rect x="4.5" y="5" width="8" height="8" stroke="#e6e6e6" stroke-width="1.2" fill="none"/>
  <path d="M6.5 3 L8.5 1 L10.5 3 M6.5 15 L8.5 17 L10.5 15 M2.5 7 L0.7 9 L2.5 11 M14.5 7 L16.3 9 L14.5 11" stroke="#e6e6e6" stroke-width="1.1" fill="none"/>
</svg>
</div>

<div id="frame"></div>
</body></html>
